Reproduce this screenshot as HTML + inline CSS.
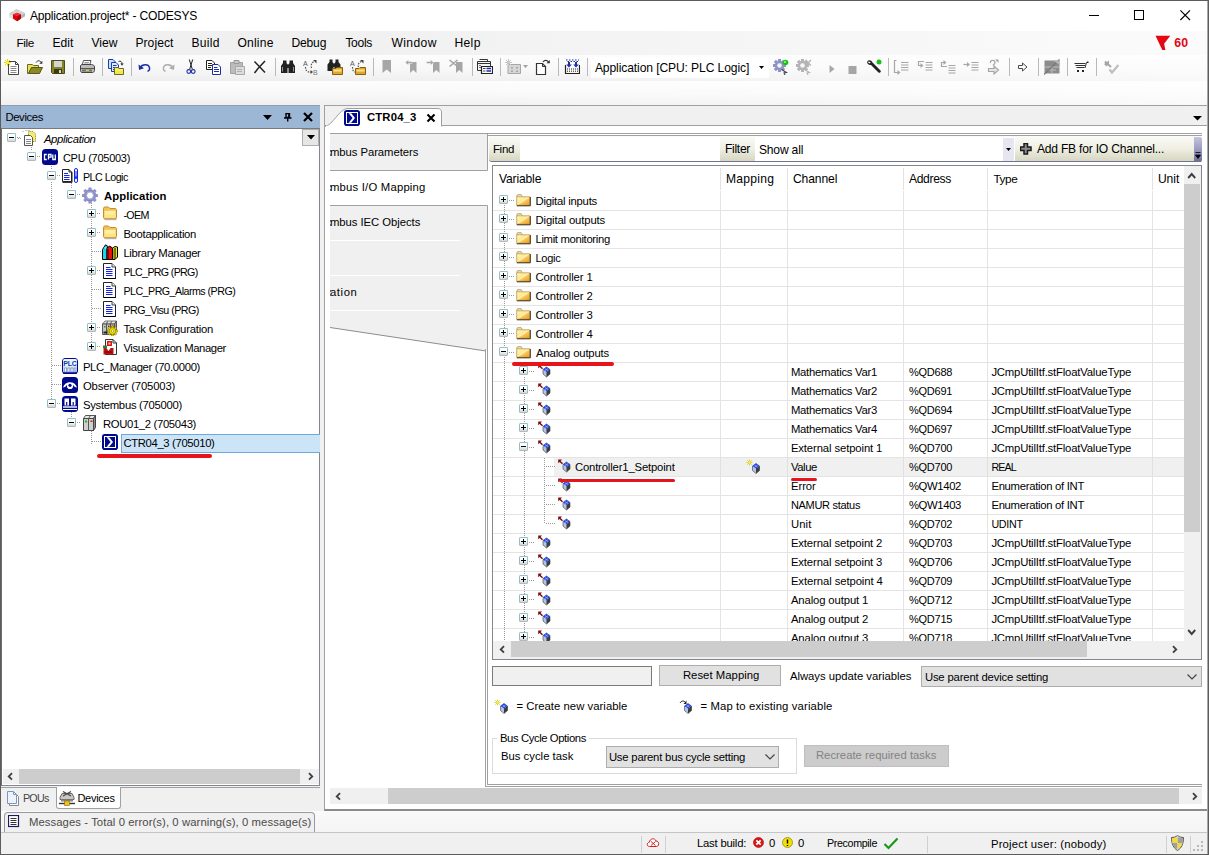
<!DOCTYPE html>
<html><head><meta charset="utf-8"><title>CODESYS</title><style>*{box-sizing:border-box;margin:0;padding:0}
html,body{width:1209px;height:855px;overflow:hidden;background:#f0f0f0}
body{font-family:"Liberation Sans",sans-serif;font-size:11px;color:#000;position:relative}
.a{position:absolute}
.t{position:absolute;white-space:nowrap;line-height:14px;height:14px}
.ex{position:absolute;width:9px;height:9px;border:1px solid #8fc0c6;border-bottom-color:#b4b8b8;border-radius:1.5px;background:linear-gradient(#fff 40%,#d4d4d4)}
.ex:before{content:"";position:absolute;left:1px;top:2.800px;width:5px;height:1.400px;background:#000}
.ex.p:after{content:"";position:absolute;left:2.800px;top:1px;width:1.400px;height:5px;background:#000}
.hd{position:absolute;height:1px;background-image:linear-gradient(90deg,#9a9a9a 50%,transparent 50%);background-size:2px 1px}
.vd{position:absolute;width:1px;background-image:linear-gradient(#9a9a9a 50%,transparent 50%);background-size:1px 2px}
.sep{position:absolute;width:1px;height:18px;top:58px;background:#b9b9b9}
</style></head><body>
<div class="a" style="left:0px;top:0px;width:1209px;height:855px;background:#f0f0f0;"></div>
<div class="a" style="left:0px;top:0px;width:1209px;height:1px;background:#5c5c5c;"></div>
<div class="a" style="left:1px;top:1px;width:1207px;height:30px;background:#fff;"></div>
<svg class="a" style="left:8px;top:8px" width="18" height="14"><path d="M1 5.800L8.500 1L17 5L17 8.200L9 13L1 9Z" fill="#d9d9d9"/><path d="M1 5.800L9 9.800V13L1 9Z" fill="#e4e4e4"/><path d="M17 5L9 9.800V13L17 8.200Z" fill="#b4b4b4"/>
<path d="M1 5.800L8.500 1L17 5L9 9.800Z" fill="#cfcfcf"/><path d="M5 3.300L13 7.500M4.800 7.800L12.800 3" stroke="#e6e6e6" stroke-width=".7"/>
<path d="M5 6.500L9 4.800L13 6.500V10.500L9 13.200L5 10.500Z" fill="#e00008"/><path d="M5 6.500L9 8.200L13 6.500L9 4.800Z" fill="#f03038"/><path d="M9 8.200L13 6.500V10.500L9 13.200Z" fill="#b80006"/></svg>
<div class="t" style="left:29.9px;top:8.6px;font-size:12.1px;letter-spacing:-0.207px;">Application.project* - CODESYS</div>
<svg class="a" style="left:1089px;top:10px" width="12" height="12"><path d="M0 5.500H10" stroke="#000"/></svg>
<svg class="a" style="left:1134px;top:10px" width="12" height="12"><rect x="0.500" y="0.500" width="9" height="9" fill="none" stroke="#000"/></svg>
<svg class="a" style="left:1180px;top:10px" width="12" height="12"><path d="M0.400 0.400L10 10M10 0.400L0.400 10" stroke="#000" stroke-width="1.100"/></svg>
<div class="a" style="left:1px;top:31px;width:1207px;height:24px;background:linear-gradient(90deg,#f0f0f0 25%,#fbfbfb);"></div>
<div class="t" style="left:16.4px;top:35.8px;font-size:11.8px;letter-spacing:-0.338px;">File</div>
<div class="t" style="left:52.4px;top:35.8px;font-size:12.1px;letter-spacing:0.050px;">Edit</div>
<div class="t" style="left:91.4px;top:35.8px;font-size:12.1px;letter-spacing:-0.003px;">View</div>
<div class="t" style="left:135.4px;top:35.8px;font-size:12.1px;letter-spacing:0.057px;">Project</div>
<div class="t" style="left:191.4px;top:35.8px;font-size:12.1px;letter-spacing:0.273px;">Build</div>
<div class="t" style="left:237.4px;top:35.8px;font-size:12.1px;letter-spacing:0.205px;">Online</div>
<div class="t" style="left:291.4px;top:35.8px;font-size:12.1px;letter-spacing:-0.164px;">Debug</div>
<div class="t" style="left:345.4px;top:35.8px;font-size:12.1px;letter-spacing:-0.312px;">Tools</div>
<div class="t" style="left:391.4px;top:35.8px;font-size:12.1px;letter-spacing:0.393px;">Window</div>
<div class="t" style="left:454.4px;top:35.8px;font-size:12.1px;letter-spacing:0.371px;">Help</div>
<svg class="a" style="left:1155px;top:35px" width="17" height="16"><path d="M0.500 0.700H15.300L9.100 8.700L10.400 14.900H7.300Z" fill="#e30613"/></svg>
<div class="t" style="left:1174.2px;top:36.1px;font-size:12.3px;letter-spacing:0.119px;font-weight:bold;color:#e30613;">60</div>
<div class="a" style="left:1px;top:55px;width:1207px;height:26px;background:linear-gradient(#fcfcfc,#f8f8f8 50%,#eeeeee);"></div>
<div class="a" style="left:1px;top:81px;width:1207px;height:24px;background:linear-gradient(#fdfdfd,#f9f9f9 50%,#f0f0f0);"></div>
<div class="a" style="left:1px;top:55px;width:1207px;height:50px;background:linear-gradient(90deg,rgba(255,255,255,0) 25%,rgba(255,255,255,.6));"></div>
<svg class="a" style="left:4px;top:59px" width="16" height="16" viewBox="0 0 16 16"><path d="M4.5 2.5H11.5L14.5 5.5V15.5H4.5Z" fill="#fff" stroke="#444"/><path d="M11.5 2.5V5.5H14.5" fill="none" stroke="#444"/>
<path d="M6.5 7.5H12.5M6.5 9.5H12.5M6.5 11.5H12.5M6.5 13.5H12.5" stroke="#8a8a8a"/>
<path d="M3.5 0V7M0 3.5H7M1 1L6 6M6 1L1 6" stroke="#e8d800" stroke-width="1"/><circle cx="3.5" cy="3.5" r="1.2" fill="#fff36a"/></svg>
<svg class="a" style="left:27px;top:59px" width="16" height="16" viewBox="0 0 16 16"><path d="M0.5 5.5H5.5L6.5 6.5H11.5V9H4.5L1.5 14.5H0.5Z" fill="#e6e05a" stroke="#6e6a1c"/>
<path d="M1.5 14.5L4.5 8.5H15.5L12.5 14.5Z" fill="#8c8a28" stroke="#5a5814"/>
<path d="M9 3.5C10.5 1.2 13 1.2 14.3 3.6" fill="none" stroke="#333"/><path d="M15.3 1.8V4.8H12.3Z" fill="#333"/></svg>
<svg class="a" style="left:50px;top:59px" width="16" height="16" viewBox="0 0 16 16"><path d="M1.5 1.5H14.5V14.5H2.5L1.5 13.5Z" fill="#86842a" stroke="#4e4c12"/>
<rect x="4" y="2" width="8" height="6" fill="#d4d4d4"/><rect x="4" y="10" width="8" height="4.5" fill="#3c3a10"/><rect x="9" y="11" width="2" height="3" fill="#d4d4d4"/></svg>
<svg class="a" style="left:79px;top:59px" width="16" height="16" viewBox="0 0 16 16"><path d="M4.5 1.5H12L10.5 6.5H3Z" fill="#fff" stroke="#555"/><path d="M5.5 3.5H10M5 5H9.5" stroke="#999"/>
<path d="M1.5 7C1.5 6 2.5 5.5 4 5.5H12.5C14 5.5 15.5 6.5 15.5 8V11.5C15.5 12.5 14.5 13.5 13.5 13.5H3C2 13.5 1.5 12.5 1.5 11.5Z" fill="#bdbdbd" stroke="#444"/>
<path d="M2 9.5H15" stroke="#555"/><rect x="3" y="10.5" width="10" height="2" fill="#6e6e6e"/><rect x="7" y="10.7" width="3" height="1.3" fill="#e6d800"/></svg>
<svg class="a" style="left:108px;top:59px" width="16" height="16" viewBox="0 0 16 16"><path d="M0.5 0.5H5L7.5 3V9.5H0.5Z" fill="#cfe0ff" stroke="#1a3ea8"/><path d="M3.5 3.5H8L10.5 6V12.5H3.5Z" fill="#dbe8ff" stroke="#1a3ea8"/>
<path d="M5 6.5H8.5M5 8.5H9M5 10.500H9" stroke="#1a3ea8"/>
<path d="M6.500 8.5H10L11 9.500H15.500V15.500H6.500Z" fill="#f2e64a" stroke="#6e6a1c"/><path d="M7 11H15" stroke="#fff9a8"/>
<path d="M10.500 2.500C12.500 1.500 14 2.500 14 5" fill="none" stroke="#333"/><path d="M12.300 4.500H15.700L14 6.800Z" fill="#333"/></svg>
<svg class="a" style="left:137px;top:59px" width="16" height="16" viewBox="0 0 16 16"><path d="M3.500 8.500C5 5 11.500 4.500 12.500 8.500C13 10.500 12 11.800 10.500 12.300" fill="none" stroke="#1c2fa8" stroke-width="1.400"/><path d="M1.500 5.500L2 11L7 9.300Z" fill="#1c2fa8"/></svg>
<svg class="a" style="left:160px;top:59px" width="16" height="16" viewBox="0 0 16 16"><path d="M12.500 8.500C11 5 4.500 4.500 3.500 8.500C3 10.500 4 11.800 5.500 12.300" fill="none" stroke="#adadad" stroke-width="1.400"/><path d="M14.500 5.500L14 11L9 9.300Z" fill="#adadad"/></svg>
<svg class="a" style="left:182.5px;top:59px" width="16" height="16" viewBox="0 0 16 16"><path d="M6.300 0.500L9.300 10.200M9.700 0.500L6.700 10.200" stroke="#222" stroke-width="1" fill="none"/><circle cx="5.800" cy="12.500" r="1.900" fill="none" stroke="#1c2fa8" stroke-width="1.100"/><circle cx="10.200" cy="12.500" r="1.900" fill="none" stroke="#1c2fa8" stroke-width="1.100"/></svg>
<svg class="a" style="left:206px;top:59px" width="16" height="16" viewBox="0 0 16 16"><path d="M0.500 1.500H6L8.500 4V10.500H0.500Z" fill="#fff" stroke="#222"/><path d="M2 4.500H6M2 6.500H6.500M2 8.500H5" stroke="#222"/>
<path d="M6.500 5.500H12L14.500 8V15.500H6.500Z" fill="#fff" stroke="#1c2fa8"/><path d="M8 8.500H11.500M8 10.500H13M8 12.500H13" stroke="#1c2fa8"/></svg>
<svg class="a" style="left:229px;top:59px" width="16" height="16" viewBox="0 0 16 16"><path d="M1.500 3.500H13.500V14.500H1.500Z" fill="#bcbcbc" stroke="#a0a0a0"/><path d="M5 1.500H10V4.500H5Z" fill="#c8c8c8" stroke="#9a9a9a"/><path d="M6.500 7.500H15.500V15.500H6.500Z" fill="#dcdcdc" stroke="#a8a8a8"/><path d="M8 10.500H13M8 12.500H13" stroke="#b0b0b0"/></svg>
<svg class="a" style="left:252px;top:59px" width="16" height="16" viewBox="0 0 16 16"><path d="M2.500 2.500L13 13.500M13 2L6 9.500L2.500 14" stroke="#222" stroke-width="1.500" fill="none"/></svg>
<svg class="a" style="left:280px;top:59px" width="16" height="16" viewBox="0 0 16 16"><path d="M3 1.500H6.500V4L7.500 5.500V14H1V7L3 4Z" fill="#222"/><path d="M9.500 1.500H13V4L15 7V14H8.500V5.500L9.500 4Z" fill="#222"/><rect x="6.500" y="5.500" width="3" height="3.500" fill="#222"/><path d="M2.500 8V12.500M13.500 8V12.500" stroke="#999"/></svg>
<svg class="a" style="left:303px;top:59px" width="16" height="16" viewBox="0 0 16 16"><text x="0" y="6.500" font-size="7" font-family="Liberation Sans" fill="#555">A</text><text x="10" y="15.500" font-size="7" font-family="Liberation Sans" fill="#777">B</text>
<path d="M2.500 8C2.500 12 5 13.500 8 13" fill="none" stroke="#555" stroke-dasharray="1.5 1.2" stroke-width="1.200"/><path d="M7.500 11L10 13L7.500 15Z" fill="#444"/>
<path d="M8.500 9C7.500 5 9.500 3 11.500 2.500" fill="none" stroke="#555" stroke-dasharray="1.5 1.2" stroke-width="1.200"/><path d="M10 1H13.500V4.500Z" fill="#444"/></svg>
<svg class="a" style="left:326.5px;top:59px" width="16" height="16" viewBox="0 0 16 16"><path d="M2.500 0.500H5.500V3L6.500 4.500V12H0.500V5.500L2.500 3Z" fill="#222"/><path d="M8.500 0.500H11.500V3L13.500 5.500V9H7.500V4.500L8.500 3Z" fill="#222"/><rect x="5.500" y="4.500" width="3" height="3.500" fill="#222"/>
<path d="M5.500 9.500H9L10 8.500H15.500V15.500H5.500Z" fill="#e2a52e" stroke="#8a5f0e"/><path d="M6.500 10.500H14.500V12.500H6.500Z" fill="#fbe28a"/></svg>
<svg class="a" style="left:350px;top:59px" width="16" height="16" viewBox="0 0 16 16"><text x="0" y="6.500" font-size="7" font-family="Liberation Sans" fill="#555">A</text>
<path d="M2.500 8C2.500 12 4 13 5.500 13" fill="none" stroke="#555" stroke-dasharray="1.5 1.2" stroke-width="1.200"/>
<path d="M8.500 8C7.500 5 9.500 3 11.500 2.500" fill="none" stroke="#555" stroke-dasharray="1.5 1.2" stroke-width="1.200"/><path d="M10 1H13.500V4.500Z" fill="#444"/>
<path d="M5.500 9.500H9L10 8.500H15.500V15.500H5.500Z" fill="#e2a52e" stroke="#8a5f0e"/><path d="M6.500 10.500H14.500V12.500H6.500Z" fill="#fbe28a"/></svg>
<svg class="a" style="left:379px;top:59px" width="16" height="16" viewBox="0 0 16 16"><path d="M3.500 1H12V14L7.750 10.500L3.500 14Z" fill="#a6a6a6"/></svg>
<svg class="a" style="left:402px;top:59px" width="16" height="16" viewBox="0 0 16 16"><path d="M8 3H14.500V14L11.250 11L8 14Z" fill="#a6a6a6"/><path d="M3 3.500L6.500 0.800V2.500H10V4.500H6.500V6.200Z" fill="#a6a6a6" stroke="#f4f4f4" stroke-width=".5"/></svg>
<svg class="a" style="left:425px;top:59px" width="16" height="16" viewBox="0 0 16 16"><path d="M8 3H14.500V14L11.250 11L8 14Z" fill="#a6a6a6"/><path d="M9 3.500L5.500 0.800V2.500H1.500V4.500H5.500V6.200Z" fill="#a6a6a6" stroke="#f4f4f4" stroke-width=".5"/></svg>
<svg class="a" style="left:448px;top:59px" width="16" height="16" viewBox="0 0 16 16"><path d="M8 3H14.500V14L11.250 11L8 14Z" fill="#a6a6a6"/><path d="M1.500 1L9.500 7.500M9.500 1L1.500 7.500" stroke="#a6a6a6" stroke-width="1.600"/></svg>
<svg class="a" style="left:477px;top:59px" width="16" height="16" viewBox="0 0 16 16"><path d="M2.500 0.500H10.500V3.500" fill="none" stroke="#333"/><path d="M0.500 2.500H13.500V11.500H0.500Z" fill="#f4f4f4" stroke="#333"/><path d="M0.500 4.500H13.500" stroke="#333"/><path d="M2 6.500H4M2 8.500H4" stroke="#777"/>
<path d="M4.500 7.500H15.500V14.500H4.500Z" fill="#fff" stroke="#222" stroke-width="1.200"/><path d="M6 9.500H8.500M6 12H8.500" stroke="#444" stroke-width="1.200"/><path d="M9.500 9.500H14M9.500 12H14" stroke="#1c2fa8" stroke-width="1.400"/></svg>
<svg class="a" style="left:505px;top:59px" width="16" height="16" viewBox="0 0 16 16"><path d="M3 5.500H15.500V14.500H3Z" fill="#d6d6d6" stroke="#a6a6a6"/><path d="M6 8H8V9.500H6ZM11 8H13V9.500H11ZM6 11.500H8V13H6ZM11 11.500H13V13H11Z" fill="#a6a6a6"/>
<path d="M3.500 0V7M0 3.500H7M1 1L6 6M6 1L1 6" stroke="#c6c6c6" stroke-width="1"/></svg>
<svg class="a" style="left:535px;top:59px" width="16" height="16" viewBox="0 0 16 16"><path d="M1.500 4.500H7.500L10.500 7.500V15.500H1.500Z" fill="#fff" stroke="#333" stroke-width="1.200"/><path d="M7.500 4.500V7.500H10.500" fill="none" stroke="#333"/>
<path d="M8 3C9.500 0.800 12 0.800 13.500 3" fill="none" stroke="#333" stroke-width="1.200"/><path d="M14.800 1V4.300H11.500Z" fill="#333"/></svg>
<svg class="a" style="left:563.5px;top:59px" width="16" height="16" viewBox="0 0 16 16"><path d="M2 1H3.500M5 1H6.500M8 1H9.500M11 1H12.500M14 1H15M3.500 2.500H5M6.500 2.500H8M9.500 2.500H11M12.500 2.500H14" stroke="#1c2fa8" stroke-width="1.200"/>
<path d="M4 3H6V5.500H7.800L5 8.500L2.200 5.500H4ZM11 3H13V5.500H14.800L12 8.500L9.200 5.500H11Z" fill="#1c2fa8"/>
<path d="M1.500 6V14.500H15.500V6" fill="none" stroke="#222" stroke-width="1.200"/><path d="M3 10H14M3 12.200H14" stroke="#222" stroke-dasharray="1 1"/></svg>
<svg class="a" style="left:773px;top:59px" width="16" height="16" viewBox="0 0 16 16"><g transform="translate(6.5,6.5)"><g fill="#8e93c4"><rect x="-1.5" y="-6.500" width="3" height="13" transform="rotate(0)"/><rect x="-1.5" y="-6.500" width="3" height="13" transform="rotate(45)"/><rect x="-1.5" y="-6.500" width="3" height="13" transform="rotate(90)"/><rect x="-1.5" y="-6.500" width="3" height="13" transform="rotate(135)"/></g><circle r="4.600" fill="#8e93c4"/><circle r="2.300" fill="#f6f6f6"/></g><circle cx="12.500" cy="3.500" r="2.800" fill="#19c219"/><circle cx="12" cy="3" r="1" fill="#9dff8a"/><path d="M8.500 10.500L13.500 13.500L11 14L12 16" fill="none" stroke="#444" stroke-width="1.100"/></svg>
<svg class="a" style="left:796px;top:59px" width="16" height="16" viewBox="0 0 16 16"><g transform="translate(6.5,6.5)"><g fill="#b4b4b4"><rect x="-1.5" y="-6.500" width="3" height="13" transform="rotate(0)"/><rect x="-1.5" y="-6.500" width="3" height="13" transform="rotate(45)"/><rect x="-1.5" y="-6.500" width="3" height="13" transform="rotate(90)"/><rect x="-1.5" y="-6.500" width="3" height="13" transform="rotate(135)"/></g><circle r="4.600" fill="#b4b4b4"/><circle r="2.300" fill="#f6f6f6"/></g><path d="M9.500 1L15 6.500M15 1L9.500 6.500" stroke="#b4b4b4" stroke-width="1.400"/><path d="M8.500 10.500L13.500 13.500L11 14L12 16" fill="none" stroke="#b4b4b4" stroke-width="1.100"/></svg>
<svg class="a" style="left:824px;top:59px" width="16" height="16" viewBox="0 0 16 16"><path d="M5.500 6L10.500 10L5.500 14Z" fill="#a6a6a6"/></svg>
<svg class="a" style="left:845px;top:59px" width="16" height="16" viewBox="0 0 16 16"><rect x="3.500" y="7" width="8" height="8" fill="#a6a6a6"/></svg>
<svg class="a" style="left:866px;top:59px" width="16" height="16" viewBox="0 0 16 16"><path d="M1 2.500C2.500 0.500 5.500 1 6.500 3.500L14.500 11.500C15.500 12.500 14 14.500 12.500 13.500L5 6C3 6.500 1 5 1 2.500L3.500 4.500L4.800 3Z" fill="#222"/><circle cx="13" cy="3" r="2.500" fill="#19c219"/></svg>
<svg class="a" style="left:893px;top:59px" width="16" height="16" viewBox="0 0 16 16"><path d="M3.500 1.500H1.500V13.500H5" fill="none" stroke="#a6a6a6" stroke-width="1.200"/><path d="M4.500 11L7.500 13.500L4.500 16Z" fill="#a6a6a6"/><path d="M8 3.500H15.500M8 6H15.500M8 8.500H15.500M8 11H15.500" stroke="#a6a6a6"/></svg>
<svg class="a" style="left:917px;top:59px" width="16" height="16" viewBox="0 0 16 16"><path d="M7 2.500H1.500V6.500H4" fill="none" stroke="#a6a6a6" stroke-width="1.200"/><path d="M3.500 4L6.500 6.500L3.500 9Z" fill="#a6a6a6"/><path d="M8.500 3.500H15.500M8.500 6H15.500M8.500 8.500H15.500M8.500 11H15.500" stroke="#a6a6a6"/></svg>
<svg class="a" style="left:940px;top:59px" width="16" height="16" viewBox="0 0 16 16"><path d="M7 7.500H1.500V3.500H4" fill="none" stroke="#a6a6a6" stroke-width="1.200"/><path d="M3.500 1L6.500 3.500L3.500 6Z" fill="#a6a6a6"/><path d="M8.500 6.500H15.500M8.500 9H15.500M8.500 11.500H15.500M8.500 14H15.500" stroke="#a6a6a6"/></svg>
<svg class="a" style="left:963px;top:59px" width="16" height="16" viewBox="0 0 16 16"><path d="M0.500 5.500H5" fill="none" stroke="#a6a6a6" stroke-width="1.200"/><path d="M4 3L7 5.500L4 8Z" fill="#a6a6a6"/><path d="M8.500 3.500H15.500M8.500 6H15.500M8.500 8.500H15.500M8.500 11H15.500" stroke="#a6a6a6"/></svg>
<svg class="a" style="left:986px;top:59px" width="16" height="16" viewBox="0 0 16 16"><path d="M4.500 4C3.500 1.500 8 0 9 3C9.500 4.500 8 5.500 7 6.500" fill="none" stroke="#a6a6a6" stroke-width="1.300"/><path d="M9 0.500H12.500V4Z" fill="#a6a6a6"/><path d="M2.500 9.500H8V7L12.500 11L8 15V12.500H2.500Z" fill="#e4e4e4" stroke="#a6a6a6" stroke-width="1.200"/></svg>
<svg class="a" style="left:1015px;top:59px" width="16" height="16" viewBox="0 0 16 16"><path d="M3.500 6.500H7.500V4L12 8L7.500 12V9.500H3.500Z" fill="#fafafa" stroke="#4a4a4a" stroke-width="1"/></svg>
<svg class="a" style="left:1044px;top:59px" width="16" height="16" viewBox="0 0 16 16"><rect x="0.500" y="1.500" width="15" height="13" fill="#8c8c8c"/><path d="M0.500 8H15.500" stroke="#c0c0c0"/><path d="M8 8V14.500M4 11H12" stroke="#bdbdbd"/><path d="M0 15.500L15.500 0.500" stroke="#777" stroke-width="1.200"/><path d="M9 1.500H15.500V6Z" fill="#b4b4b4"/></svg>
<svg class="a" style="left:1073px;top:59px" width="16" height="16" viewBox="0 0 16 16"><path d="M1.500 4.500H12.500M2.500 6.500H12M3.500 8.500H11.500" stroke="#333" stroke-width="1"/><path d="M12 9L13.500 3.500H15" fill="none" stroke="#333" stroke-width="1"/><rect x="4" y="11" width="2" height="2" fill="#222"/><rect x="9" y="11" width="2" height="2" fill="#222"/><rect x="14" y="2.500" width="1.500" height="1.500" fill="#222"/></svg>
<svg class="a" style="left:1103px;top:59px" width="16" height="16" viewBox="0 0 16 16"><path d="M1 5L6 1.500V4.500L3.500 7.500Z" fill="#a6a6a6"/><path d="M2 2.500L8 8" stroke="#a6a6a6" stroke-width="2"/><path d="M6.500 10.500L9 13.500L15.500 6" fill="none" stroke="#bdbdbd" stroke-width="2.200"/></svg>
<div class="sep" style="left:73px"></div>
<div class="sep" style="left:102px"></div>
<div class="sep" style="left:131px"></div>
<div class="sep" style="left:275px"></div>
<div class="sep" style="left:373px"></div>
<div class="sep" style="left:472px"></div>
<div class="sep" style="left:500px"></div>
<div class="sep" style="left:558px"></div>
<div class="sep" style="left:587px"></div>
<div class="sep" style="left:888px"></div>
<div class="sep" style="left:1009px"></div>
<div class="sep" style="left:1038px"></div>
<div class="sep" style="left:1067px"></div>
<div class="sep" style="left:1096px"></div>
<svg class="a" style="left:523px;top:65px" width="6" height="4"><path d="M0 0H5L2.500 3Z" fill="#a0a0a0"/></svg>
<div class="a" style="left:591px;top:57px;width:178px;height:21px;background:#fff;"></div>
<div class="t" style="left:594.9px;top:61.0px;font-size:12.1px;letter-spacing:-0.107px;">Application [CPU: PLC Logic]</div>
<svg class="a" style="left:759px;top:66px" width="6" height="4"><path d="M0 0H5L2.500 3Z" fill="#000"/></svg>
<div class="a" style="left:1px;top:105px;width:319px;height:24px;background:#9cb6d5;border-top:1px solid #8e9db1;"></div>
<div class="t" style="left:5.4px;top:110.1px;font-size:11.3px;letter-spacing:-0.365px;">Devices</div>
<svg class="a" style="left:263px;top:115px" width="10" height="6"><path d="M0 0H9L4.500 5Z" fill="#000"/></svg>
<svg class="a" style="left:284px;top:113px" width="8" height="9"><path d="M2 0.500H5.500V4.500H2ZM4.800 0.500V4.500M0 5H7.500M3.700 5V8.500" stroke="#000" fill="none" stroke-width="1.400"/></svg>
<svg class="a" style="left:303px;top:112px" width="10" height="10"><path d="M1 1L9 9M9 1L1 9" stroke="#000" stroke-width="2.200"/></svg>
<div class="a" style="left:1px;top:128px;width:319px;height:1px;background:#7a7a7a;"></div>
<div class="a" style="left:1px;top:129px;width:319px;height:657px;background:#fff;border-left:1px solid #6e6e6e;border-right:1px solid #828790;border-bottom:1px solid #828790;"></div>
<div class="a" style="left:302px;top:129px;width:17px;height:17px;background:#e6e6e6;border:1px solid #adadad;"></div>
<svg class="a" style="left:307px;top:135px" width="8" height="5"><path d="M0 0H8L4 4.500Z" fill="#000"/></svg>
<div class="vd" style="left:31px;top:143px;height:8px"></div>
<div class="vd" style="left:51px;top:162px;height:8px"></div>
<div class="vd" style="left:71px;top:181px;height:8px"></div>
<div class="vd" style="left:51px;top:182px;height:224px"></div>
<div class="vd" style="left:91px;top:201px;height:148px"></div>
<div class="vd" style="left:71px;top:410px;height:8px"></div>
<div class="vd" style="left:91px;top:429px;height:15px"></div>
<div class="a" style="left:121px;top:434px;width:199px;height:19px;background:#cce4f7;border:1px solid #6fa8dc;border-right:none;"></div>
<div class="ex" style="left:7px;top:133px"></div>
<div class="hd" style="left:17px;top:137px;width:4px"></div>
<svg class="a" style="left:22px;top:130px" width="16" height="16" viewBox="0 0 16 16"><path d="M1.500 1.500H0M3.500 0.500H8" stroke="#999" stroke-dasharray="1 1"/><path d="M6.500 1.500H11L13.500 4V11.500H6.500Z" fill="#f6ee6a" stroke="#9a9430" stroke-dasharray="1 .7"/>
<path d="M2.500 5.500H8.500L10.500 7.500V15.500H2.500Z" fill="#fff" stroke="#555"/><path d="M4 9.500H9M4 11.500H9M4 13.500H9" stroke="#888"/></svg>
<div class="t" style="left:43.9px;top:131.8px;font-size:11.3px;letter-spacing:-0.328px;font-style:italic;">Application</div>
<div class="ex" style="left:27px;top:152px"></div>
<div class="hd" style="left:37px;top:156px;width:4px"></div>
<svg class="a" style="left:42px;top:149px" width="16" height="16" viewBox="0 0 16 16"><rect x="0" y="0" width="16" height="16" rx="3.500" fill="#000a8c"/>
<path d="M4.800 5.500H2.500V10.500H4.800M6.500 10.500V5.500H9V8.200H6.500M10.800 5.500V10.500H13.300V5.500" fill="none" stroke="#fff" stroke-width="1.300"/></svg>
<div class="t" style="left:62.9px;top:150.8px;font-size:11.0px;letter-spacing:-0.256px;">CPU (705003)</div>
<div class="ex" style="left:47px;top:171px"></div>
<div class="hd" style="left:57px;top:175px;width:4px"></div>
<svg class="a" style="left:62px;top:168px" width="16" height="16" viewBox="0 0 16 16"><path d="M0.500 1.500H7L9.500 4V13.500H0.500Z" fill="#fff" stroke="#222"/><path d="M7 1.500V4H9.500" fill="none" stroke="#222"/><path d="M0.500 14.200H10.200" stroke="#222" stroke-width="1.400"/><path d="M10 4V14" stroke="#222"/>
<path d="M2 5.500H6M2 7.500H7.500M2 9.500H7.500M2 11.500H7.500" stroke="#1222e8" stroke-width="1"/>
<rect x="12.500" y="0.500" width="3" height="14" rx="1.500" fill="#fff" stroke="#1222e8"/><path d="M14 3V11" stroke="#1222e8"/><path d="M12.500 8.500H15.500L14 11.500Z" fill="#1222e8"/></svg>
<div class="t" style="left:82.9px;top:169.8px;font-size:10.7px;letter-spacing:-0.483px;">PLC Logic</div>
<div class="ex" style="left:67px;top:190px"></div>
<div class="hd" style="left:77px;top:194px;width:4px"></div>
<svg class="a" style="left:82px;top:187px" width="16" height="17" viewBox="0 0 16 17"><g transform="translate(8,8.500)"><g fill="#8f92cc"><rect x="-1.600" y="-8" width="3.200" height="16" rx=".6" transform="rotate(0)"/><rect x="-1.600" y="-8" width="3.200" height="16" rx=".6" transform="rotate(45)"/><rect x="-1.600" y="-8" width="3.200" height="16" rx=".6" transform="rotate(90)"/><rect x="-1.600" y="-8" width="3.200" height="16" rx=".6" transform="rotate(135)"/></g><circle r="6.200" fill="#9a9cd2"/><circle r="5.200" fill="none" stroke="#8284c0" stroke-width="1"/><circle r="3.400" fill="#fff"/><circle r="3.400" fill="none" stroke="#8688c4" stroke-width=".6"/></g></svg>
<div class="t" style="left:103.9px;top:188.8px;font-size:11.3px;letter-spacing:0.098px;font-weight:bold;">Application</div>
<div class="ex p" style="left:87px;top:209px"></div>
<div class="hd" style="left:97px;top:213px;width:4px"></div>
<svg class="a" style="left:102px;top:206px" width="16" height="16" viewBox="0 0 16 16"><path d="M1.500 2.500C1.500 1.500 2.200 1 3 1H6.500L8 2.500H13C14 2.500 14.500 3 14.500 4V11.500C14.500 12.300 14 12.800 13 12.800H3C2 12.800 1.500 12.300 1.500 11.500Z" fill="#f1c258" stroke="#c98e2c"/>
<path d="M2.500 4.800H13.500V11C13.500 11.600 13.200 11.800 12.700 11.800H3.300C2.800 11.800 2.500 11.600 2.500 11Z" fill="#fdf0a0"/><path d="M2.500 8.500H13.500V11.800H2.500Z" fill="#fbe37c" opacity=".8"/><path d="M2.500 13.700H14.500" stroke="#a8a8a8"/></svg>
<div class="t" style="left:123.4px;top:207.8px;font-size:10.7px;letter-spacing:-0.645px;">-OEM</div>
<div class="ex p" style="left:87px;top:228px"></div>
<div class="hd" style="left:97px;top:232px;width:4px"></div>
<svg class="a" style="left:102px;top:225px" width="16" height="16" viewBox="0 0 16 16"><path d="M1.500 2.500C1.500 1.500 2.200 1 3 1H6.500L8 2.500H13C14 2.500 14.500 3 14.500 4V11.500C14.500 12.300 14 12.800 13 12.800H3C2 12.800 1.500 12.300 1.500 11.500Z" fill="#f1c258" stroke="#c98e2c"/>
<path d="M2.500 4.800H13.500V11C13.500 11.600 13.200 11.800 12.700 11.800H3.300C2.800 11.800 2.500 11.600 2.500 11Z" fill="#fdf0a0"/><path d="M2.500 8.500H13.500V11.800H2.500Z" fill="#fbe37c" opacity=".8"/><path d="M2.500 13.700H14.500" stroke="#a8a8a8"/></svg>
<div class="t" style="left:123.4px;top:226.8px;font-size:11.3px;letter-spacing:-0.305px;">Bootapplication</div>
<div class="hd" style="left:92px;top:251px;width:9px"></div>
<svg class="a" style="left:102px;top:244px" width="16" height="16" viewBox="0 0 16 16"><path d="M0.500 5.500L3.500 0.800L6 2.500L5 4.500V15.500H0.500Z" fill="#18d8e8" stroke="#000"/><path d="M2.500 3.500L4.500 4.800" stroke="#fff" stroke-width=".8"/><path d="M5 4.500L7.500 2L10.500 4V15.500H5Z" fill="#e81010" stroke="#000"/><path d="M6.500 5V15" stroke="#900" />
<path d="M10.500 4L13 2.500L15.500 3V13L13 15.500H10.500Z" fill="#f4e800" stroke="#000"/><path d="M13 4V15" stroke="#000"/><path d="M11.700 5V14.500" stroke="#a89c00"/></svg>
<div class="t" style="left:123.4px;top:245.8px;font-size:11.3px;letter-spacing:-0.341px;">Library Manager</div>
<div class="ex p" style="left:87px;top:266px"></div>
<div class="hd" style="left:97px;top:270px;width:4px"></div>
<svg class="a" style="left:102px;top:263px" width="16" height="16" viewBox="0 0 16 16"><path d="M1.500 0.500H10L13.500 4V15.500H1.500Z" fill="#fff" stroke="#222"/><path d="M10 0.500V4H13.500" fill="#e8e8e8" stroke="#222" stroke-width=".8"/><path d="M1.500 15.700H13.700" stroke="#000" stroke-width="1.300"/>
<path d="M4 4.500H8.500M4 6.500H10.500M4 8.500H10.500M4 10.500H10.500M4 12.500H10.500" stroke="#1222e8" stroke-width="1"/></svg>
<div class="t" style="left:123.4px;top:264.8px;font-size:10.7px;letter-spacing:-0.687px;">PLC_PRG (PRG)</div>
<div class="hd" style="left:92px;top:289px;width:9px"></div>
<svg class="a" style="left:102px;top:282px" width="16" height="16" viewBox="0 0 16 16"><path d="M1.500 0.500H10L13.500 4V15.500H1.500Z" fill="#fff" stroke="#222"/><path d="M10 0.500V4H13.500" fill="#e8e8e8" stroke="#222" stroke-width=".8"/><path d="M1.500 15.700H13.700" stroke="#000" stroke-width="1.300"/>
<path d="M4 4.500H8.500M4 6.500H10.500M4 8.500H10.500M4 10.500H10.500M4 12.500H10.500" stroke="#1222e8" stroke-width="1"/></svg>
<div class="t" style="left:123.4px;top:283.8px;font-size:10.7px;letter-spacing:-0.525px;">PLC_PRG_Alarms (PRG)</div>
<div class="hd" style="left:92px;top:308px;width:9px"></div>
<svg class="a" style="left:102px;top:301px" width="16" height="16" viewBox="0 0 16 16"><path d="M1.500 0.500H10L13.500 4V15.500H1.500Z" fill="#fff" stroke="#222"/><path d="M10 0.500V4H13.500" fill="#e8e8e8" stroke="#222" stroke-width=".8"/><path d="M1.500 15.700H13.700" stroke="#000" stroke-width="1.300"/>
<path d="M4 4.500H8.500M4 6.500H10.500M4 8.500H10.500M4 10.500H10.500M4 12.500H10.500" stroke="#1222e8" stroke-width="1"/></svg>
<div class="t" style="left:123.4px;top:302.8px;font-size:10.7px;letter-spacing:-0.542px;">PRG_Visu (PRG)</div>
<div class="ex p" style="left:87px;top:323px"></div>
<div class="hd" style="left:97px;top:327px;width:4px"></div>
<svg class="a" style="left:102px;top:320px" width="16" height="16" viewBox="0 0 16 16"><path d="M0.500 4L3 1H14.500L12.500 4Z" fill="#e0e0e0" stroke="#777"/><path d="M0.500 4H12.500V14.500H0.500Z" fill="#c4c4c4" stroke="#555"/><path d="M12.500 4L14.500 1V11L12.500 14.500Z" fill="#9a9a9a" stroke="#555"/><path d="M4.500 4V14.500M8.500 4V14.500M5.500 1.500L4.500 4M9.500 1.500L8.500 4" stroke="#555"/>
<rect x="2" y="6" width="1.500" height="1.500" fill="#18a818"/><rect x="6" y="5.500" width="1.500" height="1.500" fill="#c81818"/><rect x="10" y="5.500" width="1.500" height="1.500" fill="#c81818"/><rect x="1.500" y="11.500" width="4" height="2" fill="#222"/>
<g transform="translate(10.500,11)"><g fill="#f2e200" stroke="#6e6600" stroke-width=".5"><rect x="-1" y="-5" width="2" height="10" transform="rotate(0)"/><rect x="-1" y="-5" width="2" height="10" transform="rotate(45)"/><rect x="-1" y="-5" width="2" height="10" transform="rotate(90)"/><rect x="-1" y="-5" width="2" height="10" transform="rotate(135)"/></g><circle r="3.300" fill="#f2e200" stroke="#6e6600" stroke-width=".5"/><circle r="1.200" fill="#fff" stroke="#6e6600" stroke-width=".5"/></g></svg>
<div class="t" style="left:123.4px;top:321.8px;font-size:11.3px;letter-spacing:-0.211px;">Task Configuration</div>
<div class="ex p" style="left:87px;top:342px"></div>
<div class="hd" style="left:97px;top:346px;width:4px"></div>
<svg class="a" style="left:102px;top:339px" width="16" height="16" viewBox="0 0 16 16"><path d="M3.500 0.500H11L14.500 4V15.500H3.500Z" fill="#fff" stroke="#333"/><path d="M11 0.500V4H14.500" fill="none" stroke="#333"/>
<rect x="5" y="2" width="5" height="5" fill="#d81818"/><rect x="6.500" y="3.500" width="2" height="2" fill="#f8d8a0"/><path d="M1 6.500H5V9H1Z" fill="#188a28"/>
<path d="M1.500 9H11.500V15.500H1.500Z" fill="#c01010"/><path d="M4 9L6.500 12.500L9 9" fill="#fff" stroke="#800" stroke-width=".6"/><path d="M3 13H10" stroke="#600"/></svg>
<div class="t" style="left:123.4px;top:340.8px;font-size:11.3px;letter-spacing:-0.399px;">Visualization Manager</div>
<div class="hd" style="left:52px;top:365px;width:9px"></div>
<svg class="a" style="left:62px;top:358px" width="16" height="16" viewBox="0 0 16 16"><rect x="0.500" y="0.500" width="15" height="15" rx="2.500" fill="#c8dcf4" stroke="#000a8c"/><rect x="1" y="1" width="14" height="7.500" rx="2" fill="#eaf2fc"/>
<text x="1.300" y="7.500" font-size="7" font-weight="bold" font-family="Liberation Sans" fill="#1438a8" letter-spacing="-0.3">PLC</text>
<path d="M2.500 10H4.500V14H2.500ZM5.800 10H7.800V14H5.800ZM9 10H11V14H9ZM12.200 10H13.800V14H12.200Z" fill="#fff" stroke="#5a78c0" stroke-width=".6"/><path d="M1 15H15" stroke="#000a8c" stroke-width="1.500"/></svg>
<div class="t" style="left:82.9px;top:359.8px;font-size:11.3px;letter-spacing:-0.344px;">PLC_Manager (70.0000)</div>
<div class="hd" style="left:52px;top:384px;width:9px"></div>
<svg class="a" style="left:62px;top:377px" width="16" height="16" viewBox="0 0 16 16"><rect x="0" y="0" width="16" height="16" rx="3.500" fill="#000a8c"/><path d="M1 10.500C3 3.500 13 3.500 15 10.500L12.800 10C11 6.800 5 6.800 3.200 10Z" fill="#fff"/><circle cx="8" cy="9" r="3.100" fill="#fff"/><circle cx="8" cy="8.300" r="1.600" fill="#000a8c"/></svg>
<div class="t" style="left:82.9px;top:378.8px;font-size:11.3px;letter-spacing:-0.146px;">Observer (705003)</div>
<div class="ex" style="left:47px;top:399px"></div>
<div class="hd" style="left:57px;top:403px;width:4px"></div>
<svg class="a" style="left:62px;top:396px" width="16" height="16" viewBox="0 0 16 16"><rect x="0" y="0" width="16" height="16" rx="3.500" fill="#000a8c"/><path d="M2.500 2.500H7V9.500H2.500ZM9 2.500H13.500V9.500H9Z" fill="#fff"/><path d="M4.700 6V9.500M11.200 6V9.500" stroke="#000a8c" stroke-width="1.200"/><path d="M1 11H15" stroke="#fff" stroke-width="1.400"/><path d="M1 13.500H15" stroke="#fff" stroke-width="1"/></svg>
<div class="t" style="left:82.9px;top:397.8px;font-size:11.3px;letter-spacing:-0.280px;">Systembus (705000)</div>
<div class="ex" style="left:67px;top:418px"></div>
<div class="hd" style="left:77px;top:422px;width:4px"></div>
<svg class="a" style="left:82px;top:415px" width="16" height="16" viewBox="0 0 16 16"><path d="M1.500 3.500L3.500 0.500H13.500L11.500 3.500Z" fill="#e8e8e8" stroke="#555"/><path d="M1.500 3.500H11.500V15.500H1.500Z" fill="#cfcfcf" stroke="#444"/><path d="M11.500 3.500L13.500 0.500V12.500L11.500 15.500Z" fill="#8a8a8a" stroke="#444"/><path d="M6.500 3.500V15.500M8.500 0.500L6.500 3.500" stroke="#555"/>
<rect x="3" y="5.500" width="2" height="2" fill="#18b818"/><rect x="8.500" y="5.500" width="2" height="1.500" fill="#d81818"/></svg>
<div class="t" style="left:102.9px;top:416.8px;font-size:11.3px;letter-spacing:-0.341px;">ROU01_2 (705043)</div>
<div class="hd" style="left:92px;top:441px;width:9px"></div>
<svg class="a" style="left:102px;top:434px" width="16" height="16" viewBox="0 0 16 16"><rect x="0" y="0" width="16" height="16" rx="2.800" fill="#000a8c"/><rect x="2.500" y="2.500" width="11" height="11" fill="none" stroke="#fff" stroke-width="1"/><path d="M4.600 3.200H7.200L11 8L7.200 12.800H4.600L8.600 8Z" fill="#fff"/></svg>
<div class="t" style="left:123.4px;top:435.8px;font-size:11.3px;letter-spacing:-0.349px;">CTR04_3 (705010)</div>
<div class="hd" style="left:18px;top:138px;width:4px"></div>
<div class="a" style="left:97px;top:454px;width:115px;height:3.5px;background:#e8141c;border-radius:2px;"></div>
<div class="a" style="left:3px;top:769px;width:316px;height:15px;background:#f0f0f0;"></div>
<div class="a" style="left:19px;top:769px;width:281px;height:15px;background:#cdcdcd;"></div>
<svg class="a" style="left:7px;top:772px" width="7" height="9"><path d="M5 1.200L1.800 4.400L5 7.600" fill="none" stroke="#404040" stroke-width="1.900"/></svg>
<svg class="a" style="left:307px;top:772px" width="7" height="9"><path d="M2 1.200L5.200 4.400L2 7.600" fill="none" stroke="#404040" stroke-width="1.900"/></svg>
<div class="a" style="left:1px;top:787px;width:319px;height:1px;background:#a0a0a0;"></div>
<div class="a" style="left:56px;top:787px;width:65px;height:22px;background:#fff;border:1px solid #a0a0a0;border-top:none;border-radius:0 0 3px 3px;"></div>
<svg class="a" style="left:6px;top:790px" width="14" height="16"><path d="M3.500 3.500H9.500L12.500 6.500V15.500H3.500Z" fill="#fff" stroke="#8a8a8a"/><path d="M1.500 1.500H7.500L10.500 4.500V13.500H1.500Z" fill="#eef3fb" stroke="#7b96c2"/><path d="M7.500 1.500V4.500H10.500" fill="none" stroke="#7b96c2"/></svg>
<div class="t" style="left:22.9px;top:791.1px;font-size:10.7px;letter-spacing:-0.679px;color:#444;">POUs</div>
<svg class="a" style="left:59px;top:790px" width="16" height="16"><path d="M3 3.500H13L15 7.500V9.500H1V7.500Z" fill="#c8c8c8" stroke="#666"/><path d="M4 1.500L12 6M12 1.500L4 6" stroke="#444" stroke-width="1.200"/><rect x="2" y="9.500" width="12" height="2" fill="#888"/><path d="M0 13.500H16" stroke="#333" stroke-width="1.400"/><rect x="5.500" y="11" width="5" height="4.500" fill="#f0c020" stroke="#8a6a00" stroke-width=".6"/></svg>
<div class="t" style="left:77.4px;top:791.1px;font-size:11.0px;letter-spacing:-0.271px;">Devices</div>
<div class="a" style="left:324px;top:105px;width:883px;height:706px;background:#fff;border:1px solid #a0a0a0;border-right:none;border-bottom:2px solid #8c8c8c;"></div>
<div class="a" style="left:325px;top:106px;width:882px;height:20px;background:#f0f0f0;border-bottom:1px solid #a0a0a0;"></div>
<svg class="a" style="left:325px;top:107px" width="120" height="20"><path d="M0 19.500C8 18 14 2.500 22 1.500H113C115 1.500 116.500 3 116.500 5V19.500" fill="#fff" stroke="#a0a0a0"/><path d="M1 19.500H116" stroke="#fff" stroke-width="1.500"/></svg>
<svg class="a" style="left:344px;top:110px" width="16" height="16" viewBox="0 0 16 16"><rect x="0" y="0" width="16" height="16" rx="2.800" fill="#000a8c"/><rect x="2.500" y="2.500" width="11" height="11" fill="none" stroke="#fff" stroke-width="1"/><path d="M4.600 3.200H7.200L11 8L7.200 12.800H4.600L8.600 8Z" fill="#fff"/></svg>
<div class="t" style="left:366.9px;top:110.4px;font-size:11.3px;letter-spacing:0.190px;font-weight:bold;">CTR04_3</div>
<svg class="a" style="left:426px;top:113px" width="10" height="10"><path d="M1.500 1.500L8.500 8.500M8.500 1.500L1.500 8.500" stroke="#000" stroke-width="2.100"/></svg>
<svg class="a" style="left:1193px;top:116px" width="10" height="6"><path d="M0 0H9L4.500 4.500Z" fill="#000"/></svg>
<div class="a" style="left:330px;top:133px;width:872px;height:1px;background:#a0a0a0;"></div>
<div class="a" style="left:487px;top:135px;width:715px;height:1px;background:#a0a0a0;"></div>
<svg class="a" style="left:330px;top:134px" width="158" height="220"><path d="M0 0H157V217L0 193.500Z" fill="#f0f0f0"/>
<path d="M0 36.500H157.500M157.500 0V36.500M0 71.500H157.500V217" fill="none" stroke="#a0a0a0"/><path d="M0 193.500L156 217" stroke="#8c8c8c"/>
<rect x="0" y="37" width="158" height="34" fill="#fff"/>
<path d="M0 106.500H130M0 141.500H130M0 176.500H130" stroke="#fff"/></svg>
<div class="a" style="left:487px;top:351px;width:1px;height:434px;background:#a0a0a0;"></div>
<div class="a" style="left:485px;top:349px;width:1px;height:438px;background:#a0a0a0;"></div>
<div class="t" style="left:329.9px;top:145.1px;font-size:11.3px;letter-spacing:-0.048px;">mbus Parameters</div>
<div class="t" style="left:329.9px;top:180.1px;font-size:11.3px;letter-spacing:0.212px;">mbus I/O Mapping</div>
<div class="t" style="left:329.9px;top:215.1px;font-size:11.3px;letter-spacing:-0.037px;">mbus IEC Objects</div>
<div class="t" style="left:329.9px;top:285.1px;font-size:11.3px;letter-spacing:0.624px;">ation</div>
<div class="a" style="left:330px;top:150px;width:1px;height:1.5px;background:#666;"></div>
<div class="a" style="left:330px;top:154px;width:1px;height:1.5px;background:#666;"></div>
<div class="a" style="left:330px;top:185px;width:1px;height:1.5px;background:#666;"></div>
<div class="a" style="left:330px;top:189px;width:1px;height:1.5px;background:#666;"></div>
<div class="a" style="left:330px;top:220px;width:1px;height:1.5px;background:#666;"></div>
<div class="a" style="left:330px;top:224px;width:1px;height:1.5px;background:#666;"></div>
<div class="a" style="left:330px;top:290px;width:1px;height:1.5px;background:#666;"></div>
<div class="a" style="left:330px;top:294px;width:1px;height:1.5px;background:#666;"></div>
<div class="a" style="left:489px;top:136px;width:712px;height:26px;background:linear-gradient(#fbfbf7,#efefe4 50%,#d6d6c2);border-bottom:1px solid #70748c;border-radius:3px 0 0 3px;"></div>
<div class="a" style="left:520px;top:137px;width:200px;height:24px;background:#fff;"></div>
<div class="a" style="left:755px;top:137px;width:260px;height:24px;background:#fff;"></div>
<div class="a" style="left:1003px;top:138px;width:11px;height:23px;background:#e6e6f0;"></div>
<div class="t" style="left:492.9px;top:142.1px;font-size:11.5px;letter-spacing:-0.291px;">Find</div>
<div class="t" style="left:724.9px;top:142.1px;font-size:12.1px;letter-spacing:-0.278px;">Filter</div>
<div class="t" style="left:758.9px;top:143.1px;font-size:12.1px;letter-spacing:-0.177px;">Show all</div>
<svg class="a" style="left:1006px;top:148px" width="6" height="4"><path d="M0 0H5L2.500 3Z" fill="#000"/></svg>
<svg class="a" style="left:1020px;top:143px" width="12" height="12"><path d="M4 0.500H7.500V4H11V7.500H7.500V11H4V7.500H0.500V4H4Z" fill="#8c8c8c" stroke="#1a1a1a" stroke-width="1.500"/></svg>
<div class="t" style="left:1036.9px;top:142.1px;font-size:12.1px;letter-spacing:-0.217px;">Add FB for IO Channel...</div>
<div class="a" style="left:1194px;top:137px;width:8px;height:25px;background:linear-gradient(#c4c4e0,#9a9ac0 50%,#6c6c98);border-radius:0 2px 2px 0;"></div>
<svg class="a" style="left:1195px;top:152px" width="6" height="8"><path d="M0.500 0.500H5.500M0.500 3H5.500L3 6.500Z" fill="#000" stroke="#000" stroke-width=".8"/></svg>
<div class="a" style="left:492px;top:165px;width:710px;height:495px;background:#fff;border:1px solid #828790;"></div>
<div class="t" style="left:498.9px;top:172.4px;font-size:12.1px;letter-spacing:-0.143px;">Variable</div>
<div class="t" style="left:725.9px;top:172.4px;font-size:12.1px;letter-spacing:0.264px;">Mapping</div>
<div class="t" style="left:792.9px;top:172.4px;font-size:12.1px;letter-spacing:-0.096px;">Channel</div>
<div class="t" style="left:908.9px;top:172.4px;font-size:12.1px;letter-spacing:-0.315px;">Address</div>
<div class="t" style="left:993.4px;top:172.4px;font-size:11.8px;letter-spacing:-0.361px;">Type</div>
<div class="t" style="left:1157.9px;top:172.4px;font-size:12.1px;letter-spacing:-0.006px;">Unit</div>
<div class="a" style="left:720px;top:168px;width:1px;height:22px;background:#e2e2e2;"></div>
<div class="a" style="left:787px;top:168px;width:1px;height:22px;background:#e2e2e2;"></div>
<div class="a" style="left:903px;top:168px;width:1px;height:22px;background:#e2e2e2;"></div>
<div class="a" style="left:987px;top:168px;width:1px;height:22px;background:#e2e2e2;"></div>
<div class="a" style="left:1152px;top:168px;width:1px;height:22px;background:#e2e2e2;"></div>
<div class="a" style="left:493px;top:210px;width:691px;height:1px;background:#e4e4e4;"></div>
<div class="a" style="left:493px;top:229px;width:691px;height:1px;background:#e4e4e4;"></div>
<div class="a" style="left:493px;top:248px;width:691px;height:1px;background:#e4e4e4;"></div>
<div class="a" style="left:493px;top:267px;width:691px;height:1px;background:#e4e4e4;"></div>
<div class="a" style="left:493px;top:286px;width:691px;height:1px;background:#e4e4e4;"></div>
<div class="a" style="left:493px;top:305px;width:691px;height:1px;background:#e4e4e4;"></div>
<div class="a" style="left:493px;top:324px;width:691px;height:1px;background:#e4e4e4;"></div>
<div class="a" style="left:493px;top:343px;width:691px;height:1px;background:#e4e4e4;"></div>
<div class="a" style="left:493px;top:362px;width:691px;height:1px;background:#e4e4e4;"></div>
<div class="a" style="left:493px;top:381px;width:691px;height:1px;background:#e4e4e4;"></div>
<div class="a" style="left:493px;top:400px;width:691px;height:1px;background:#e4e4e4;"></div>
<div class="a" style="left:493px;top:419px;width:691px;height:1px;background:#e4e4e4;"></div>
<div class="a" style="left:493px;top:438px;width:691px;height:1px;background:#e4e4e4;"></div>
<div class="a" style="left:493px;top:457px;width:691px;height:1px;background:#e4e4e4;"></div>
<div class="a" style="left:493px;top:476px;width:691px;height:1px;background:#e4e4e4;"></div>
<div class="a" style="left:493px;top:495px;width:691px;height:1px;background:#e4e4e4;"></div>
<div class="a" style="left:493px;top:514px;width:691px;height:1px;background:#e4e4e4;"></div>
<div class="a" style="left:493px;top:533px;width:691px;height:1px;background:#e4e4e4;"></div>
<div class="a" style="left:493px;top:552px;width:691px;height:1px;background:#e4e4e4;"></div>
<div class="a" style="left:493px;top:571px;width:691px;height:1px;background:#e4e4e4;"></div>
<div class="a" style="left:493px;top:590px;width:691px;height:1px;background:#e4e4e4;"></div>
<div class="a" style="left:493px;top:609px;width:691px;height:1px;background:#e4e4e4;"></div>
<div class="a" style="left:493px;top:628px;width:691px;height:1px;background:#e4e4e4;"></div>
<div class="a" style="left:720px;top:191px;width:1px;height:450px;background:#e4e4e4;"></div>
<div class="a" style="left:787px;top:191px;width:1px;height:450px;background:#e4e4e4;"></div>
<div class="a" style="left:903px;top:191px;width:1px;height:450px;background:#e4e4e4;"></div>
<div class="a" style="left:987px;top:191px;width:1px;height:450px;background:#e4e4e4;"></div>
<div class="a" style="left:1152px;top:191px;width:1px;height:450px;background:#e4e4e4;"></div>
<div class="a" style="left:554px;top:458px;width:630px;height:18px;background:#f0f0f0;"></div>
<div class="a" style="left:720px;top:458px;width:1px;height:18px;background:#e0e0e0;"></div>
<div class="a" style="left:787px;top:458px;width:1px;height:18px;background:#e0e0e0;"></div>
<div class="a" style="left:903px;top:458px;width:1px;height:18px;background:#e0e0e0;"></div>
<div class="a" style="left:987px;top:458px;width:1px;height:18px;background:#e0e0e0;"></div>
<div class="a" style="left:1152px;top:458px;width:1px;height:18px;background:#e0e0e0;"></div>
<div class="vd" style="left:504px;top:205px;height:436px"></div>
<div class="vd" style="left:524px;top:377px;height:264px"></div>
<div class="vd" style="left:544px;top:458px;height:66px"></div>
<div class="ex p" style="left:499px;top:195px"></div>
<div class="hd" style="left:509px;top:200px;width:6px"></div>
<svg class="a" style="left:516px;top:194px" width="16" height="13" viewBox="0 0 16 13"><defs><linearGradient id="fg0" x1="0" y1="0" x2="1" y2="1"><stop offset="0" stop-color="#fffbd4"/><stop offset=".38" stop-color="#ffe98c"/><stop offset=".48" stop-color="#fff2b8"/><stop offset=".58" stop-color="#f9c558"/><stop offset="1" stop-color="#e79a22"/></linearGradient></defs>
<path d="M1 3V1.500C1 1 1.300 0.700 1.800 0.700H5.200L6.200 2.500" fill="#f6e6b0" stroke="#a8905c" stroke-width=".8"/><path d="M0.700 2.800H13.800V11.300H0.700Z" fill="url(#fg0)" stroke="#b08c3c" stroke-width=".7"/><path d="M14.300 3V11.800H0.800" fill="none" stroke="#3c3010" stroke-width="1"/></svg>
<div class="t" style="left:535.5px;top:194.1px;font-size:11.3px;letter-spacing:-0.230px;">Digital inputs</div>
<div class="ex p" style="left:499px;top:214px"></div>
<div class="hd" style="left:509px;top:219px;width:6px"></div>
<svg class="a" style="left:516px;top:213px" width="16" height="13" viewBox="0 0 16 13"><defs><linearGradient id="fg1" x1="0" y1="0" x2="1" y2="1"><stop offset="0" stop-color="#fffbd4"/><stop offset=".38" stop-color="#ffe98c"/><stop offset=".48" stop-color="#fff2b8"/><stop offset=".58" stop-color="#f9c558"/><stop offset="1" stop-color="#e79a22"/></linearGradient></defs>
<path d="M1 3V1.500C1 1 1.300 0.700 1.800 0.700H5.200L6.200 2.500" fill="#f6e6b0" stroke="#a8905c" stroke-width=".8"/><path d="M0.700 2.800H13.800V11.300H0.700Z" fill="url(#fg1)" stroke="#b08c3c" stroke-width=".7"/><path d="M14.300 3V11.800H0.800" fill="none" stroke="#3c3010" stroke-width="1"/></svg>
<div class="t" style="left:535.5px;top:213.1px;font-size:11.3px;letter-spacing:-0.136px;">Digital outputs</div>
<div class="ex p" style="left:499px;top:233px"></div>
<div class="hd" style="left:509px;top:238px;width:6px"></div>
<svg class="a" style="left:516px;top:232px" width="16" height="13" viewBox="0 0 16 13"><defs><linearGradient id="fg2" x1="0" y1="0" x2="1" y2="1"><stop offset="0" stop-color="#fffbd4"/><stop offset=".38" stop-color="#ffe98c"/><stop offset=".48" stop-color="#fff2b8"/><stop offset=".58" stop-color="#f9c558"/><stop offset="1" stop-color="#e79a22"/></linearGradient></defs>
<path d="M1 3V1.500C1 1 1.300 0.700 1.800 0.700H5.200L6.200 2.500" fill="#f6e6b0" stroke="#a8905c" stroke-width=".8"/><path d="M0.700 2.800H13.800V11.300H0.700Z" fill="url(#fg2)" stroke="#b08c3c" stroke-width=".7"/><path d="M14.300 3V11.800H0.800" fill="none" stroke="#3c3010" stroke-width="1"/></svg>
<div class="t" style="left:535.5px;top:232.1px;font-size:11.3px;letter-spacing:-0.337px;">Limit monitoring</div>
<div class="ex p" style="left:499px;top:252px"></div>
<div class="hd" style="left:509px;top:257px;width:6px"></div>
<svg class="a" style="left:516px;top:251px" width="16" height="13" viewBox="0 0 16 13"><defs><linearGradient id="fg3" x1="0" y1="0" x2="1" y2="1"><stop offset="0" stop-color="#fffbd4"/><stop offset=".38" stop-color="#ffe98c"/><stop offset=".48" stop-color="#fff2b8"/><stop offset=".58" stop-color="#f9c558"/><stop offset="1" stop-color="#e79a22"/></linearGradient></defs>
<path d="M1 3V1.500C1 1 1.300 0.700 1.800 0.700H5.200L6.200 2.500" fill="#f6e6b0" stroke="#a8905c" stroke-width=".8"/><path d="M0.700 2.800H13.800V11.300H0.700Z" fill="url(#fg3)" stroke="#b08c3c" stroke-width=".7"/><path d="M14.300 3V11.800H0.800" fill="none" stroke="#3c3010" stroke-width="1"/></svg>
<div class="t" style="left:535.5px;top:251.1px;font-size:11.0px;letter-spacing:-0.274px;">Logic</div>
<div class="ex p" style="left:499px;top:271px"></div>
<div class="hd" style="left:509px;top:276px;width:6px"></div>
<svg class="a" style="left:516px;top:270px" width="16" height="13" viewBox="0 0 16 13"><defs><linearGradient id="fg4" x1="0" y1="0" x2="1" y2="1"><stop offset="0" stop-color="#fffbd4"/><stop offset=".38" stop-color="#ffe98c"/><stop offset=".48" stop-color="#fff2b8"/><stop offset=".58" stop-color="#f9c558"/><stop offset="1" stop-color="#e79a22"/></linearGradient></defs>
<path d="M1 3V1.500C1 1 1.300 0.700 1.800 0.700H5.200L6.200 2.500" fill="#f6e6b0" stroke="#a8905c" stroke-width=".8"/><path d="M0.700 2.800H13.800V11.300H0.700Z" fill="url(#fg4)" stroke="#b08c3c" stroke-width=".7"/><path d="M14.300 3V11.800H0.800" fill="none" stroke="#3c3010" stroke-width="1"/></svg>
<div class="t" style="left:535.5px;top:270.1px;font-size:11.3px;letter-spacing:-0.110px;">Controller 1</div>
<div class="ex p" style="left:499px;top:290px"></div>
<div class="hd" style="left:509px;top:295px;width:6px"></div>
<svg class="a" style="left:516px;top:289px" width="16" height="13" viewBox="0 0 16 13"><defs><linearGradient id="fg5" x1="0" y1="0" x2="1" y2="1"><stop offset="0" stop-color="#fffbd4"/><stop offset=".38" stop-color="#ffe98c"/><stop offset=".48" stop-color="#fff2b8"/><stop offset=".58" stop-color="#f9c558"/><stop offset="1" stop-color="#e79a22"/></linearGradient></defs>
<path d="M1 3V1.500C1 1 1.300 0.700 1.800 0.700H5.200L6.200 2.500" fill="#f6e6b0" stroke="#a8905c" stroke-width=".8"/><path d="M0.700 2.800H13.800V11.300H0.700Z" fill="url(#fg5)" stroke="#b08c3c" stroke-width=".7"/><path d="M14.300 3V11.800H0.800" fill="none" stroke="#3c3010" stroke-width="1"/></svg>
<div class="t" style="left:535.5px;top:289.1px;font-size:11.3px;letter-spacing:-0.110px;">Controller 2</div>
<div class="ex p" style="left:499px;top:309px"></div>
<div class="hd" style="left:509px;top:314px;width:6px"></div>
<svg class="a" style="left:516px;top:308px" width="16" height="13" viewBox="0 0 16 13"><defs><linearGradient id="fg6" x1="0" y1="0" x2="1" y2="1"><stop offset="0" stop-color="#fffbd4"/><stop offset=".38" stop-color="#ffe98c"/><stop offset=".48" stop-color="#fff2b8"/><stop offset=".58" stop-color="#f9c558"/><stop offset="1" stop-color="#e79a22"/></linearGradient></defs>
<path d="M1 3V1.500C1 1 1.300 0.700 1.800 0.700H5.200L6.200 2.500" fill="#f6e6b0" stroke="#a8905c" stroke-width=".8"/><path d="M0.700 2.800H13.800V11.300H0.700Z" fill="url(#fg6)" stroke="#b08c3c" stroke-width=".7"/><path d="M14.300 3V11.800H0.800" fill="none" stroke="#3c3010" stroke-width="1"/></svg>
<div class="t" style="left:535.5px;top:308.1px;font-size:11.3px;letter-spacing:-0.110px;">Controller 3</div>
<div class="ex p" style="left:499px;top:328px"></div>
<div class="hd" style="left:509px;top:333px;width:6px"></div>
<svg class="a" style="left:516px;top:327px" width="16" height="13" viewBox="0 0 16 13"><defs><linearGradient id="fg7" x1="0" y1="0" x2="1" y2="1"><stop offset="0" stop-color="#fffbd4"/><stop offset=".38" stop-color="#ffe98c"/><stop offset=".48" stop-color="#fff2b8"/><stop offset=".58" stop-color="#f9c558"/><stop offset="1" stop-color="#e79a22"/></linearGradient></defs>
<path d="M1 3V1.500C1 1 1.300 0.700 1.800 0.700H5.200L6.200 2.500" fill="#f6e6b0" stroke="#a8905c" stroke-width=".8"/><path d="M0.700 2.800H13.800V11.300H0.700Z" fill="url(#fg7)" stroke="#b08c3c" stroke-width=".7"/><path d="M14.300 3V11.800H0.800" fill="none" stroke="#3c3010" stroke-width="1"/></svg>
<div class="t" style="left:535.5px;top:327.1px;font-size:11.3px;letter-spacing:-0.110px;">Controller 4</div>
<div class="ex" style="left:499px;top:347px"></div>
<div class="hd" style="left:509px;top:352px;width:6px"></div>
<svg class="a" style="left:516px;top:346px" width="16" height="13" viewBox="0 0 16 13"><defs><linearGradient id="fg8" x1="0" y1="0" x2="1" y2="1"><stop offset="0" stop-color="#fffbd4"/><stop offset=".38" stop-color="#ffe98c"/><stop offset=".48" stop-color="#fff2b8"/><stop offset=".58" stop-color="#f9c558"/><stop offset="1" stop-color="#e79a22"/></linearGradient></defs>
<path d="M1 3V1.500C1 1 1.300 0.700 1.800 0.700H5.200L6.200 2.500" fill="#f6e6b0" stroke="#a8905c" stroke-width=".8"/><path d="M0.700 2.800H13.800V11.300H0.700Z" fill="url(#fg8)" stroke="#b08c3c" stroke-width=".7"/><path d="M14.300 3V11.800H0.800" fill="none" stroke="#3c3010" stroke-width="1"/></svg>
<div class="t" style="left:536.1px;top:346.1px;font-size:11.3px;letter-spacing:-0.176px;">Analog outputs</div>
<div class="ex p" style="left:519px;top:366px"></div>
<div class="hd" style="left:529px;top:371px;width:6px"></div>
<svg class="a" style="left:536.5px;top:364px" width="16" height="16" viewBox="0 0 16 16"><path d="M0.500 0.500H5L3.600 1.900L6 4.300L5 5.300L2.600 2.900L1.200 4.300V0.500Z" fill="#7a0c0c"/><path d="M6 5.5L9.5 3L13 5.5V10L9.5 13L6 10Z" fill="#b4c4e4" stroke="#3a3a3a" stroke-width=".6"/><path d="M6 5.5L9.5 8L13 5.5L9.5 3Z" fill="#2244f0"/><path d="M9.5 8V13L13 10V5.5Z" fill="#3c3c3c"/><path d="M8 4.6L11 6.6M11 4.6L8 6.6" stroke="#b8c4ff" stroke-width=".6"/></svg>
<div class="t" style="left:790.9px;top:365.1px;font-size:11.3px;letter-spacing:-0.248px;">Mathematics Var1</div>
<div class="t" style="left:908.9px;top:365.1px;font-size:11.0px;letter-spacing:-0.227px;">%QD688</div>
<div class="t" style="left:991.4px;top:365.1px;font-size:11.3px;letter-spacing:-0.180px;">JCmpUtilItf.stFloatValueType</div>
<div class="ex p" style="left:519px;top:385px"></div>
<div class="hd" style="left:529px;top:390px;width:6px"></div>
<svg class="a" style="left:536.5px;top:383px" width="16" height="16" viewBox="0 0 16 16"><path d="M0.500 0.500H5L3.600 1.900L6 4.300L5 5.300L2.600 2.900L1.200 4.300V0.500Z" fill="#7a0c0c"/><path d="M6 5.5L9.5 3L13 5.5V10L9.5 13L6 10Z" fill="#b4c4e4" stroke="#3a3a3a" stroke-width=".6"/><path d="M6 5.5L9.5 8L13 5.5L9.5 3Z" fill="#2244f0"/><path d="M9.5 8V13L13 10V5.5Z" fill="#3c3c3c"/><path d="M8 4.6L11 6.6M11 4.6L8 6.6" stroke="#b8c4ff" stroke-width=".6"/></svg>
<div class="t" style="left:790.9px;top:384.1px;font-size:11.3px;letter-spacing:-0.248px;">Mathematics Var2</div>
<div class="t" style="left:908.9px;top:384.1px;font-size:11.0px;letter-spacing:-0.227px;">%QD691</div>
<div class="t" style="left:991.4px;top:384.1px;font-size:11.3px;letter-spacing:-0.180px;">JCmpUtilItf.stFloatValueType</div>
<div class="ex p" style="left:519px;top:404px"></div>
<div class="hd" style="left:529px;top:409px;width:6px"></div>
<svg class="a" style="left:536.5px;top:402px" width="16" height="16" viewBox="0 0 16 16"><path d="M0.500 0.500H5L3.600 1.900L6 4.300L5 5.300L2.600 2.900L1.200 4.300V0.500Z" fill="#7a0c0c"/><path d="M6 5.5L9.5 3L13 5.5V10L9.5 13L6 10Z" fill="#b4c4e4" stroke="#3a3a3a" stroke-width=".6"/><path d="M6 5.5L9.5 8L13 5.5L9.5 3Z" fill="#2244f0"/><path d="M9.5 8V13L13 10V5.5Z" fill="#3c3c3c"/><path d="M8 4.6L11 6.6M11 4.6L8 6.6" stroke="#b8c4ff" stroke-width=".6"/></svg>
<div class="t" style="left:790.9px;top:403.1px;font-size:11.3px;letter-spacing:-0.248px;">Mathematics Var3</div>
<div class="t" style="left:908.9px;top:403.1px;font-size:11.0px;letter-spacing:-0.227px;">%QD694</div>
<div class="t" style="left:991.4px;top:403.1px;font-size:11.3px;letter-spacing:-0.180px;">JCmpUtilItf.stFloatValueType</div>
<div class="ex p" style="left:519px;top:423px"></div>
<div class="hd" style="left:529px;top:428px;width:6px"></div>
<svg class="a" style="left:536.5px;top:421px" width="16" height="16" viewBox="0 0 16 16"><path d="M0.500 0.500H5L3.600 1.900L6 4.300L5 5.300L2.600 2.900L1.200 4.300V0.500Z" fill="#7a0c0c"/><path d="M6 5.5L9.5 3L13 5.5V10L9.5 13L6 10Z" fill="#b4c4e4" stroke="#3a3a3a" stroke-width=".6"/><path d="M6 5.5L9.5 8L13 5.5L9.5 3Z" fill="#2244f0"/><path d="M9.5 8V13L13 10V5.5Z" fill="#3c3c3c"/><path d="M8 4.6L11 6.6M11 4.6L8 6.6" stroke="#b8c4ff" stroke-width=".6"/></svg>
<div class="t" style="left:790.9px;top:422.1px;font-size:11.3px;letter-spacing:-0.248px;">Mathematics Var4</div>
<div class="t" style="left:908.9px;top:422.1px;font-size:11.0px;letter-spacing:-0.227px;">%QD697</div>
<div class="t" style="left:991.4px;top:422.1px;font-size:11.3px;letter-spacing:-0.180px;">JCmpUtilItf.stFloatValueType</div>
<div class="ex" style="left:519px;top:442px"></div>
<div class="hd" style="left:529px;top:447px;width:6px"></div>
<svg class="a" style="left:536.5px;top:440px" width="16" height="16" viewBox="0 0 16 16"><path d="M0.500 0.500H5L3.600 1.900L6 4.300L5 5.300L2.600 2.900L1.200 4.300V0.500Z" fill="#7a0c0c"/><path d="M6 5.5L9.5 3L13 5.5V10L9.5 13L6 10Z" fill="#b4c4e4" stroke="#3a3a3a" stroke-width=".6"/><path d="M6 5.5L9.5 8L13 5.5L9.5 3Z" fill="#2244f0"/><path d="M9.5 8V13L13 10V5.5Z" fill="#3c3c3c"/><path d="M8 4.6L11 6.6M11 4.6L8 6.6" stroke="#b8c4ff" stroke-width=".6"/></svg>
<div class="t" style="left:790.9px;top:441.1px;font-size:11.3px;letter-spacing:-0.116px;">External setpoint 1</div>
<div class="t" style="left:908.9px;top:441.1px;font-size:11.0px;letter-spacing:-0.227px;">%QD700</div>
<div class="t" style="left:991.4px;top:441.1px;font-size:11.3px;letter-spacing:-0.180px;">JCmpUtilItf.stFloatValueType</div>
<div class="hd" style="left:546px;top:466px;width:9px"></div>
<svg class="a" style="left:556.5px;top:459px" width="16" height="16" viewBox="0 0 16 16"><path d="M0.500 0.500H5L3.600 1.900L6 4.300L5 5.300L2.600 2.900L1.200 4.300V0.500Z" fill="#7a0c0c"/><path d="M6 5.5L9.5 3L13 5.5V10L9.5 13L6 10Z" fill="#b4c4e4" stroke="#3a3a3a" stroke-width=".6"/><path d="M6 5.5L9.5 8L13 5.5L9.5 3Z" fill="#2244f0"/><path d="M9.5 8V13L13 10V5.5Z" fill="#3c3c3c"/><path d="M8 4.6L11 6.6M11 4.6L8 6.6" stroke="#b8c4ff" stroke-width=".6"/></svg>
<div class="t" style="left:790.9px;top:460.1px;font-size:11.3px;letter-spacing:-0.390px;">Value</div>
<div class="t" style="left:908.9px;top:460.1px;font-size:11.0px;letter-spacing:-0.227px;">%QD700</div>
<div class="t" style="left:991.4px;top:460.1px;font-size:10.7px;letter-spacing:-0.884px;">REAL</div>
<div class="hd" style="left:546px;top:485px;width:9px"></div>
<svg class="a" style="left:556.5px;top:478px" width="16" height="16" viewBox="0 0 16 16"><path d="M0.500 0.500H5L3.600 1.900L6 4.300L5 5.300L2.600 2.900L1.200 4.300V0.500Z" fill="#7a0c0c"/><path d="M6 5.5L9.5 3L13 5.5V10L9.5 13L6 10Z" fill="#b4c4e4" stroke="#3a3a3a" stroke-width=".6"/><path d="M6 5.5L9.5 8L13 5.5L9.5 3Z" fill="#2244f0"/><path d="M9.5 8V13L13 10V5.5Z" fill="#3c3c3c"/><path d="M8 4.6L11 6.6M11 4.6L8 6.6" stroke="#b8c4ff" stroke-width=".6"/></svg>
<div class="t" style="left:790.9px;top:479.1px;font-size:11.3px;letter-spacing:-0.028px;">Error</div>
<div class="t" style="left:908.9px;top:479.1px;font-size:11.3px;letter-spacing:-0.357px;">%QW1402</div>
<div class="t" style="left:991.4px;top:479.1px;font-size:11.3px;letter-spacing:-0.293px;">Enumeration of INT</div>
<div class="hd" style="left:546px;top:504px;width:9px"></div>
<svg class="a" style="left:556.5px;top:497px" width="16" height="16" viewBox="0 0 16 16"><path d="M0.500 0.500H5L3.600 1.900L6 4.300L5 5.300L2.600 2.900L1.200 4.300V0.500Z" fill="#7a0c0c"/><path d="M6 5.5L9.5 3L13 5.5V10L9.5 13L6 10Z" fill="#b4c4e4" stroke="#3a3a3a" stroke-width=".6"/><path d="M6 5.5L9.5 8L13 5.5L9.5 3Z" fill="#2244f0"/><path d="M9.5 8V13L13 10V5.5Z" fill="#3c3c3c"/><path d="M8 4.6L11 6.6M11 4.6L8 6.6" stroke="#b8c4ff" stroke-width=".6"/></svg>
<div class="t" style="left:790.9px;top:498.1px;font-size:11.0px;letter-spacing:-0.294px;">NAMUR status</div>
<div class="t" style="left:908.9px;top:498.1px;font-size:11.3px;letter-spacing:-0.357px;">%QW1403</div>
<div class="t" style="left:991.4px;top:498.1px;font-size:11.3px;letter-spacing:-0.293px;">Enumeration of INT</div>
<div class="hd" style="left:546px;top:523px;width:9px"></div>
<svg class="a" style="left:556.5px;top:516px" width="16" height="16" viewBox="0 0 16 16"><path d="M0.500 0.500H5L3.600 1.900L6 4.300L5 5.300L2.600 2.900L1.200 4.300V0.500Z" fill="#7a0c0c"/><path d="M6 5.5L9.5 3L13 5.5V10L9.5 13L6 10Z" fill="#b4c4e4" stroke="#3a3a3a" stroke-width=".6"/><path d="M6 5.5L9.5 8L13 5.5L9.5 3Z" fill="#2244f0"/><path d="M9.5 8V13L13 10V5.5Z" fill="#3c3c3c"/><path d="M8 4.6L11 6.6M11 4.6L8 6.6" stroke="#b8c4ff" stroke-width=".6"/></svg>
<div class="t" style="left:790.9px;top:517.1px;font-size:11.3px;letter-spacing:0.135px;">Unit</div>
<div class="t" style="left:908.9px;top:517.1px;font-size:11.0px;letter-spacing:-0.227px;">%QD702</div>
<div class="t" style="left:991.4px;top:517.1px;font-size:10.7px;letter-spacing:-0.273px;">UDINT</div>
<div class="ex p" style="left:519px;top:537px"></div>
<div class="hd" style="left:529px;top:542px;width:6px"></div>
<svg class="a" style="left:536.5px;top:535px" width="16" height="16" viewBox="0 0 16 16"><path d="M0.500 0.500H5L3.600 1.900L6 4.300L5 5.300L2.600 2.900L1.200 4.300V0.500Z" fill="#7a0c0c"/><path d="M6 5.5L9.5 3L13 5.5V10L9.5 13L6 10Z" fill="#b4c4e4" stroke="#3a3a3a" stroke-width=".6"/><path d="M6 5.5L9.5 8L13 5.5L9.5 3Z" fill="#2244f0"/><path d="M9.5 8V13L13 10V5.5Z" fill="#3c3c3c"/><path d="M8 4.6L11 6.6M11 4.6L8 6.6" stroke="#b8c4ff" stroke-width=".6"/></svg>
<div class="t" style="left:790.9px;top:536.1px;font-size:11.3px;letter-spacing:-0.116px;">External setpoint 2</div>
<div class="t" style="left:908.9px;top:536.1px;font-size:11.0px;letter-spacing:-0.227px;">%QD703</div>
<div class="t" style="left:991.4px;top:536.1px;font-size:11.3px;letter-spacing:-0.180px;">JCmpUtilItf.stFloatValueType</div>
<div class="ex p" style="left:519px;top:556px"></div>
<div class="hd" style="left:529px;top:561px;width:6px"></div>
<svg class="a" style="left:536.5px;top:554px" width="16" height="16" viewBox="0 0 16 16"><path d="M0.500 0.500H5L3.600 1.900L6 4.300L5 5.300L2.600 2.900L1.200 4.300V0.500Z" fill="#7a0c0c"/><path d="M6 5.5L9.5 3L13 5.5V10L9.5 13L6 10Z" fill="#b4c4e4" stroke="#3a3a3a" stroke-width=".6"/><path d="M6 5.5L9.5 8L13 5.5L9.5 3Z" fill="#2244f0"/><path d="M9.5 8V13L13 10V5.5Z" fill="#3c3c3c"/><path d="M8 4.6L11 6.6M11 4.6L8 6.6" stroke="#b8c4ff" stroke-width=".6"/></svg>
<div class="t" style="left:790.9px;top:555.1px;font-size:11.3px;letter-spacing:-0.116px;">External setpoint 3</div>
<div class="t" style="left:908.9px;top:555.1px;font-size:11.0px;letter-spacing:-0.227px;">%QD706</div>
<div class="t" style="left:991.4px;top:555.1px;font-size:11.3px;letter-spacing:-0.180px;">JCmpUtilItf.stFloatValueType</div>
<div class="ex p" style="left:519px;top:575px"></div>
<div class="hd" style="left:529px;top:580px;width:6px"></div>
<svg class="a" style="left:536.5px;top:573px" width="16" height="16" viewBox="0 0 16 16"><path d="M0.500 0.500H5L3.600 1.900L6 4.300L5 5.300L2.600 2.900L1.200 4.300V0.500Z" fill="#7a0c0c"/><path d="M6 5.5L9.5 3L13 5.5V10L9.5 13L6 10Z" fill="#b4c4e4" stroke="#3a3a3a" stroke-width=".6"/><path d="M6 5.5L9.5 8L13 5.5L9.5 3Z" fill="#2244f0"/><path d="M9.5 8V13L13 10V5.5Z" fill="#3c3c3c"/><path d="M8 4.6L11 6.6M11 4.6L8 6.6" stroke="#b8c4ff" stroke-width=".6"/></svg>
<div class="t" style="left:790.9px;top:574.1px;font-size:11.3px;letter-spacing:-0.089px;">External setpoint 4</div>
<div class="t" style="left:908.9px;top:574.1px;font-size:11.0px;letter-spacing:-0.227px;">%QD709</div>
<div class="t" style="left:991.4px;top:574.1px;font-size:11.3px;letter-spacing:-0.180px;">JCmpUtilItf.stFloatValueType</div>
<div class="ex p" style="left:519px;top:594px"></div>
<div class="hd" style="left:529px;top:599px;width:6px"></div>
<svg class="a" style="left:536.5px;top:592px" width="16" height="16" viewBox="0 0 16 16"><path d="M0.500 0.500H5L3.600 1.900L6 4.300L5 5.300L2.600 2.900L1.200 4.300V0.500Z" fill="#7a0c0c"/><path d="M6 5.5L9.5 3L13 5.5V10L9.5 13L6 10Z" fill="#b4c4e4" stroke="#3a3a3a" stroke-width=".6"/><path d="M6 5.5L9.5 8L13 5.5L9.5 3Z" fill="#2244f0"/><path d="M9.5 8V13L13 10V5.5Z" fill="#3c3c3c"/><path d="M8 4.6L11 6.6M11 4.6L8 6.6" stroke="#b8c4ff" stroke-width=".6"/></svg>
<div class="t" style="left:790.9px;top:593.1px;font-size:11.3px;letter-spacing:-0.119px;">Analog output 1</div>
<div class="t" style="left:908.9px;top:593.1px;font-size:11.0px;letter-spacing:-0.227px;">%QD712</div>
<div class="t" style="left:991.4px;top:593.1px;font-size:11.3px;letter-spacing:-0.180px;">JCmpUtilItf.stFloatValueType</div>
<div class="ex p" style="left:519px;top:613px"></div>
<div class="hd" style="left:529px;top:618px;width:6px"></div>
<svg class="a" style="left:536.5px;top:611px" width="16" height="16" viewBox="0 0 16 16"><path d="M0.500 0.500H5L3.600 1.900L6 4.300L5 5.300L2.600 2.900L1.200 4.300V0.500Z" fill="#7a0c0c"/><path d="M6 5.5L9.5 3L13 5.5V10L9.5 13L6 10Z" fill="#b4c4e4" stroke="#3a3a3a" stroke-width=".6"/><path d="M6 5.5L9.5 8L13 5.5L9.5 3Z" fill="#2244f0"/><path d="M9.5 8V13L13 10V5.5Z" fill="#3c3c3c"/><path d="M8 4.6L11 6.6M11 4.6L8 6.6" stroke="#b8c4ff" stroke-width=".6"/></svg>
<div class="t" style="left:790.9px;top:612.1px;font-size:11.3px;letter-spacing:-0.119px;">Analog output 2</div>
<div class="t" style="left:908.9px;top:612.1px;font-size:11.0px;letter-spacing:-0.227px;">%QD715</div>
<div class="t" style="left:991.4px;top:612.1px;font-size:11.3px;letter-spacing:-0.180px;">JCmpUtilItf.stFloatValueType</div>
<div class="ex p" style="left:519px;top:632px"></div>
<div class="hd" style="left:529px;top:637px;width:6px"></div>
<svg class="a" style="left:536.5px;top:630px" width="16" height="16" viewBox="0 0 16 16"><path d="M0.500 0.500H5L3.600 1.900L6 4.300L5 5.300L2.600 2.900L1.200 4.300V0.500Z" fill="#7a0c0c"/><path d="M6 5.5L9.5 3L13 5.5V10L9.5 13L6 10Z" fill="#b4c4e4" stroke="#3a3a3a" stroke-width=".6"/><path d="M6 5.5L9.5 8L13 5.5L9.5 3Z" fill="#2244f0"/><path d="M9.5 8V13L13 10V5.5Z" fill="#3c3c3c"/><path d="M8 4.6L11 6.6M11 4.6L8 6.6" stroke="#b8c4ff" stroke-width=".6"/></svg>
<div class="t" style="left:790.9px;top:631.1px;font-size:11.3px;letter-spacing:-0.119px;">Analog output 3</div>
<div class="t" style="left:908.9px;top:631.1px;font-size:11.0px;letter-spacing:-0.227px;">%QD718</div>
<div class="t" style="left:991.4px;top:631.1px;font-size:11.3px;letter-spacing:-0.180px;">JCmpUtilItf.stFloatValueType</div>
<div class="t" style="left:574.9px;top:460.1px;font-size:11.3px;letter-spacing:-0.159px;">Controller1_Setpoint</div>
<svg class="a" style="left:745.5px;top:459px" width="16" height="16" viewBox="0 0 16 16"><path d="M3.500 0.500V6.500M0.500 3.500H6.500M1.300 1.300L5.700 5.700M5.700 1.300L1.300 5.700" stroke="#dccc00" stroke-width=".8"/><circle cx="3.500" cy="3.500" r="1" fill="#fff68a"/><path d="M6.5 7L10 4.5L13.5 7V11.5L10 14.5L6.5 11.5Z" fill="#b4c4e4" stroke="#3a3a3a" stroke-width=".6"/><path d="M6.5 7L10 9.5L13.5 7L10 4.5Z" fill="#2244f0"/><path d="M10 9.5V14.5L13.5 11.5V7Z" fill="#3c3c3c"/><path d="M8.5 6.1L11.5 8.1M11.5 6.1L8.5 8.1" stroke="#b8c4ff" stroke-width=".6"/></svg>
<div class="a" style="left:512px;top:362px;width:102px;height:3.5px;background:#e8141c;border-radius:2px;"></div>
<div class="a" style="left:559px;top:478.5px;width:116px;height:3.5px;background:#e8141c;border-radius:2px;"></div>
<div class="a" style="left:791px;top:478px;width:26px;height:3px;background:#e8141c;border-radius:2px;"></div>
<div class="a" style="left:493px;top:641px;width:708px;height:18px;background:#f0f0f0;"></div>
<div class="a" style="left:511px;top:641px;width:576px;height:16px;background:#cdcdcd;"></div>
<svg class="a" style="left:499px;top:645px" width="7" height="9"><path d="M5 1.200L1.800 4.400L5 7.600" fill="none" stroke="#404040" stroke-width="1.900"/></svg>
<svg class="a" style="left:1171px;top:645px" width="7" height="9"><path d="M2 1.200L5.200 4.400L2 7.600" fill="none" stroke="#404040" stroke-width="1.900"/></svg>
<div class="a" style="left:1184px;top:166px;width:17px;height:475px;background:#f0f0f0;"></div>
<div class="a" style="left:1184px;top:184px;width:16px;height:348px;background:#cdcdcd;"></div>
<svg class="a" style="left:1187px;top:172px" width="10" height="8"><path d="M1.200 6L4.700 2L8.200 6" fill="none" stroke="#404040" stroke-width="1.900"/></svg>
<svg class="a" style="left:1187px;top:628px" width="10" height="8"><path d="M1.200 2L4.700 6L8.200 2" fill="none" stroke="#404040" stroke-width="1.900"/></svg>
<div class="a" style="left:492px;top:666px;width:160px;height:20px;background:#f0f0f0;border:1px solid #7a7a7a;"></div>
<div class="a" style="left:659px;top:665px;width:122px;height:21px;background:#e1e1e1;border:1px solid #adadad;"></div>
<div class="t" style="left:682.9px;top:668.1px;font-size:11.3px;letter-spacing:0.041px;">Reset Mapping</div>
<div class="t" style="left:789.9px;top:669.1px;font-size:11.3px;letter-spacing:-0.016px;">Always update variables</div>
<div class="a" style="left:921px;top:666px;width:281px;height:21px;background:#e1e1e1;border:1px solid #adadad;"></div>
<div class="t" style="left:924.9px;top:670.1px;font-size:11.3px;letter-spacing:-0.167px;">Use parent device setting</div>
<svg class="a" style="left:1187px;top:674px" width="10" height="7"><path d="M0.500 0.500L5 5L9.500 0.500" fill="none" stroke="#444" stroke-width="1.200"/></svg>
<svg class="a" style="left:494px;top:699px" width="16" height="16" viewBox="0 0 16 16"><path d="M3.500 0.500V6.500M0.500 3.500H6.500M1.300 1.300L5.700 5.700M5.700 1.300L1.300 5.700" stroke="#dccc00" stroke-width=".8"/><circle cx="3.500" cy="3.500" r="1" fill="#fff68a"/><path d="M6.5 7L10 4.5L13.5 7V11.5L10 14.5L6.5 11.5Z" fill="#b4c4e4" stroke="#3a3a3a" stroke-width=".6"/><path d="M6.5 7L10 9.5L13.5 7L10 4.5Z" fill="#2244f0"/><path d="M10 9.5V14.5L13.5 11.5V7Z" fill="#3c3c3c"/><path d="M8.5 6.1L11.5 8.1M11.5 6.1L8.5 8.1" stroke="#b8c4ff" stroke-width=".6"/></svg>
<div class="t" style="left:516.4px;top:699.1px;font-size:11.3px;letter-spacing:0.038px;">= Create new variable</div>
<svg class="a" style="left:679px;top:699px" width="16" height="16" viewBox="0 0 16 16"><path d="M1 4C2.500 1.500 5 1.500 6.500 3.500" fill="none" stroke="#222" stroke-width="1"/><path d="M7.500 1.500V5H4.500Z" fill="#222"/><path d="M5.5 7L9 4.5L12.5 7V11.5L9 14.5L5.5 11.5Z" fill="#b4c4e4" stroke="#3a3a3a" stroke-width=".6"/><path d="M5.5 7L9 9.5L12.5 7L9 4.5Z" fill="#2244f0"/><path d="M9 9.5V14.5L12.5 11.5V7Z" fill="#3c3c3c"/><path d="M7.5 6.1L10.5 8.1M10.5 6.1L7.5 8.1" stroke="#b8c4ff" stroke-width=".6"/></svg>
<div class="t" style="left:700.4px;top:699.1px;font-size:11.3px;letter-spacing:0.142px;">= Map to existing variable</div>
<div class="a" style="left:492px;top:738px;width:305px;height:36px;border:1px solid #dcdcdc;"></div>
<div class="a" style="left:497px;top:732px;width:92px;height:12px;background:#fff;"></div>
<div class="t" style="left:499.9px;top:731.1px;font-size:11.3px;letter-spacing:-0.403px;">Bus Cycle Options</div>
<div class="t" style="left:500.9px;top:749.1px;font-size:11.3px;letter-spacing:0.022px;">Bus cycle task</div>
<div class="a" style="left:606px;top:746px;width:173px;height:22px;background:#e1e1e1;border:1px solid #adadad;"></div>
<div class="t" style="left:608.9px;top:750.1px;font-size:11.3px;letter-spacing:-0.202px;">Use parent bus cycle setting</div>
<svg class="a" style="left:765px;top:754px" width="10" height="7"><path d="M0.500 0.500L5 5L9.500 0.500" fill="none" stroke="#444" stroke-width="1.200"/></svg>
<div class="a" style="left:804px;top:745px;width:145px;height:22px;background:#cccccc;border:1px solid #bfbfbf;"></div>
<div class="t" style="left:815.9px;top:748.1px;font-size:11.3px;letter-spacing:0.024px;color:#838383;">Recreate required tasks</div>
<div class="a" style="left:487px;top:784px;width:715px;height:1px;background:#a0a0a0;"></div>
<div class="a" style="left:485px;top:786px;width:717px;height:1px;background:#a0a0a0;"></div>
<div class="a" style="left:330px;top:788px;width:872px;height:16px;background:#f0f0f0;"></div>
<div class="a" style="left:388px;top:788px;width:791px;height:16px;background:#cdcdcd;"></div>
<svg class="a" style="left:335px;top:792px" width="7" height="9"><path d="M5 1.200L1.800 4.400L5 7.600" fill="none" stroke="#404040" stroke-width="1.900"/></svg>
<svg class="a" style="left:1191px;top:792px" width="7" height="9"><path d="M2 1.200L5.200 4.400L2 7.600" fill="none" stroke="#404040" stroke-width="1.900"/></svg>
<div class="a" style="left:1px;top:811px;width:1207px;height:22px;background:linear-gradient(#fafafa,#f4f4f4);"></div>
<div class="a" style="left:4px;top:812px;width:311px;height:21px;background:#f0f0f0;border:1px solid #9a9a9a;border-bottom:none;border-radius:4px 4px 0 0;"></div>
<div class="a" style="left:1px;top:832px;width:1207px;height:1px;background:#c4c4c4;"></div>
<svg class="a" style="left:8px;top:815px" width="12" height="13"><rect x="0.500" y="0.500" width="10" height="11" fill="#fff" stroke="#1a1a60" stroke-width="1.200"/><path d="M2.500 3.500H8.500M2.500 5.500H8.500M2.500 7.500H8.500M2.500 9.500H8.500" stroke="#333"/></svg>
<div class="t" style="left:28.9px;top:815.1px;font-size:11.3px;letter-spacing:0.084px;color:#4a4a4a;">Messages - Total 0 error(s), 0 warning(s), 0 message(s)</div>
<div class="a" style="left:1px;top:833px;width:1207px;height:21px;background:#f0f0f0;"></div>
<div class="a" style="left:641px;top:836px;width:1px;height:17px;background:#d0d0d0;"></div>
<div class="a" style="left:665px;top:836px;width:1px;height:17px;background:#d0d0d0;"></div>
<div class="a" style="left:927px;top:836px;width:1px;height:17px;background:#d0d0d0;"></div>
<div class="a" style="left:1166px;top:836px;width:1px;height:17px;background:#d0d0d0;"></div>
<div class="a" style="left:1190px;top:836px;width:1px;height:17px;background:#d0d0d0;"></div>
<svg class="a" style="left:646px;top:836px" width="14" height="12"><path d="M3.500 10.500C0.500 10.500 0.500 6.500 3.500 6.200C3.500 2.500 9 1.500 10 5C13.500 5 13.500 10.500 10.500 10.500Z" fill="#fff" stroke="#d02020"/><path d="M5 5.500L9.500 9.500M9.500 5.500L5 9.500" stroke="#d02020"/></svg>
<div class="t" style="left:696.9px;top:836.1px;font-size:11.3px;letter-spacing:-0.201px;">Last build:</div>
<svg class="a" style="left:753px;top:837px" width="11" height="11"><circle cx="5.500" cy="5.500" r="5" fill="#dc1414" stroke="#9c0c0c" stroke-width=".6"/><path d="M3.300 3.300L7.700 7.700M7.700 3.300L3.300 7.700" stroke="#fff" stroke-width="1.700"/></svg>
<div class="t" style="left:768.9px;top:836.1px;font-size:11.3px;letter-spacing:0.216px;">0</div>
<svg class="a" style="left:782px;top:837px" width="11" height="11"><circle cx="5.500" cy="5.500" r="5" fill="#f4e000" stroke="#8a8000" stroke-width=".7"/><path d="M5.500 2.500V6.500M5.500 8V9" stroke="#000" stroke-width="1.400"/></svg>
<div class="t" style="left:797.9px;top:836.1px;font-size:11.3px;letter-spacing:0.216px;">0</div>
<div class="t" style="left:826.9px;top:836.1px;font-size:10.7px;letter-spacing:-0.336px;">Precompile</div>
<svg class="a" style="left:883px;top:837px" width="16" height="13"><path d="M1.500 7L5.500 11L14.500 1.500" fill="none" stroke="#18981c" stroke-width="2.200"/></svg>
<div class="t" style="left:990.9px;top:837.1px;font-size:11.3px;letter-spacing:0.206px;">Project user: (nobody)</div>
<svg class="a" style="left:1171px;top:835px" width="13" height="16"><path d="M6.500 0.500C8 2 10.500 2.500 12.500 2.500C12.500 9 10.500 13 6.500 15.500C2.500 13 0.500 9 0.500 2.500C2.500 2.500 5 2 6.500 0.500Z" fill="#e8e8e8" stroke="#555"/><path d="M6.500 2V8H11.500C12 6 12 4 12 3.200C10 3.200 8 2.800 6.500 2Z" fill="#a0a0a0"/><path d="M6.500 8V14.500C4 13 2.200 11 1.500 8Z" fill="#a0a0a0"/><path d="M6.500 8H1.500C1 6 1 4 1 3.200C3 3.200 5 2.800 6.500 2Z" fill="#f4d840"/><path d="M6.500 8V14.500C9 13 10.800 11 11.500 8Z" fill="#f4d840"/></svg>
<svg class="a" style="left:1192px;top:840px" width="13" height="13"><g fill="#b8b8b8"><rect x="9" y="1" width="2" height="2"/><rect x="9" y="5" width="2" height="2"/><rect x="5" y="5" width="2" height="2"/><rect x="9" y="9" width="2" height="2"/><rect x="5" y="9" width="2" height="2"/><rect x="1" y="9" width="2" height="2"/></g></svg>
<div class="a" style="left:0px;top:854px;width:1209px;height:1px;background:#5c5c5c;"></div>
<div class="a" style="left:0px;top:0px;width:1px;height:855px;background:#5c5c5c;"></div>
<div class="a" style="left:1207px;top:1px;width:1px;height:853px;background:#a8a8a8;"></div>
<div class="a" style="left:1208px;top:0px;width:1px;height:855px;background:#5c5c5c;"></div>
</body></html>
